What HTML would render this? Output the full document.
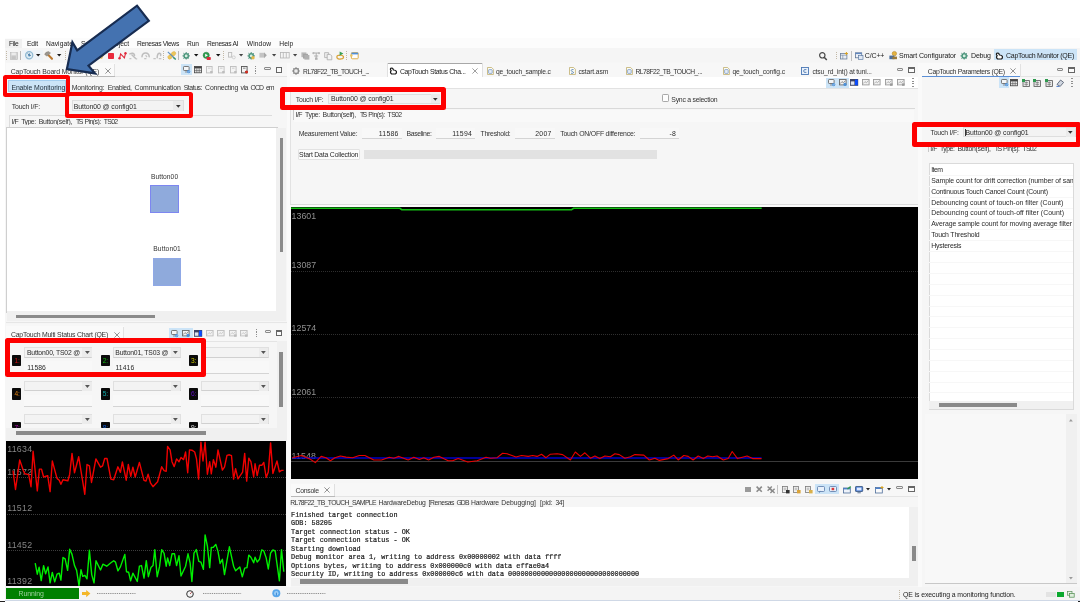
<!DOCTYPE html>
<html>
<head>
<meta charset="utf-8">
<title>CapTouch Monitor</title>
<style>
html,body{margin:0;padding:0;background:#fff;}
html{overflow:hidden;}
body{width:1080px;height:603px;position:relative;overflow:hidden;font-family:"Liberation Sans",sans-serif;font-size:6.7px;color:#2b2b2b;}
#w{left:0;top:0;width:1100px;height:620px;filter:blur(0.55px);background:#fff;}
div,span{position:absolute;box-sizing:border-box;white-space:nowrap;}
span{overflow:visible;}
</style>
</head>
<body>
<div id="w">
<div style="left:5.00px;top:38.00px;width:1075.00px;height:562.50px;background:#f6f6f6;"></div>
<div style="left:0.00px;top:600.50px;width:1080.00px;height:2.50px;background:#fff;"></div>
<div style="left:5.00px;top:600.30px;width:1075.00px;height:1.00px;background:#cfd8e6;"></div>
<div style="left:0.00px;top:600.60px;width:5.00px;height:1.60px;background:#222;"></div>
<div style="left:1077.50px;top:600.60px;width:2.50px;height:1.60px;background:#222;"></div>
<div style="left:5.00px;top:38.00px;width:1075.00px;height:9.80px;background:#fcfcfc;"></div>
<div style="left:5.00px;top:39.00px;width:17.00px;height:8.60px;background:#f0f0f0;"></div>
<span style="left:9.00px;top:38.50px;font-size:6.70px;line-height:10px;height:10px;color:#222;letter-spacing:-0.374px;">File</span>
<span style="left:27.00px;top:38.50px;font-size:6.70px;line-height:10px;height:10px;color:#222;letter-spacing:-0.136px;">Edit</span>
<span style="left:46.00px;top:38.50px;font-size:6.70px;line-height:10px;height:10px;color:#222;letter-spacing:0.069px;">Navigate</span>
<span style="left:81.00px;top:38.50px;font-size:6.70px;line-height:10px;height:10px;color:#222;letter-spacing:-0.122px;">Search</span>
<span style="left:108.50px;top:38.50px;font-size:6.70px;line-height:10px;height:10px;color:#222;letter-spacing:-0.050px;">Project</span>
<span style="left:137.00px;top:38.50px;font-size:6.70px;line-height:10px;height:10px;color:#222;letter-spacing:-0.312px;">Renesas Views</span>
<span style="left:187.00px;top:38.50px;font-size:6.70px;line-height:10px;height:10px;color:#222;letter-spacing:-0.197px;">Run</span>
<span style="left:207.00px;top:38.50px;font-size:6.70px;line-height:10px;height:10px;color:#222;letter-spacing:-0.297px;">Renesas AI</span>
<span style="left:246.70px;top:38.50px;font-size:6.70px;line-height:10px;height:10px;color:#222;letter-spacing:0.128px;">Window</span>
<span style="left:279.30px;top:38.50px;font-size:6.70px;line-height:10px;height:10px;color:#222;letter-spacing:0.055px;">Help</span>
<div style="left:5.00px;top:47.80px;width:1075.00px;height:14.70px;background:#f5f5f5;"></div>
<svg style="position:absolute;left:6.10px;top:51.00px;overflow:visible" width="1" height="9" viewBox="0 0 1 9"><line x1="0.5" y1="0" x2="0.5" y2="9" stroke="#c2b8a6" stroke-width="1" stroke-dasharray="1,1"/></svg>
<svg style="position:absolute;left:9.60px;top:51.80px;overflow:visible" width="8.2" height="8.2" viewBox="0 0 8.2 8.2"><rect x="0.3" y="0.3" width="7.4" height="7.4" fill="#d6d6d6" stroke="#bdbdbd" stroke-width="0.6"/><rect x="1.6" y="0.6" width="4.2" height="2.4" fill="#ececec"/><rect x="1.6" y="4.2" width="4.2" height="3" fill="#c4c4c4"/></svg>
<div style="left:19.90px;top:51.00px;width:0.80px;height:9.30px;background:#b8b8b8;"></div>
<div style="left:21.70px;top:49.80px;width:21.70px;height:10.60px;background:#eef3f8;"></div>
<svg style="position:absolute;left:24.60px;top:51.30px;overflow:visible" width="8.4" height="8.4" viewBox="0 0 8.4 8.4"><circle cx="4.2" cy="4.2" r="3.6" fill="#dcebf4" stroke="#8fb8d2" stroke-width="1.2"/><path d="M2.6 2.6 L5 5 M4.4 2.4 L4.4 4.4 L6 4.4" stroke="#3a6f9a" stroke-width="0.8" fill="none"/><circle cx="4.2" cy="4.4" r="1" fill="#4d86b4"/></svg>
<svg style="position:absolute;left:36.30px;top:54.20px;overflow:visible" width="4.4" height="2.6" viewBox="0 0 4.4 2.6"><polygon points="0,0 4.4,0 2.2,2.6" fill="#1a1a1a"/></svg>
<svg style="position:absolute;left:44.40px;top:51.00px;overflow:visible" width="9.4" height="9" viewBox="0 0 9.4 9"><path d="M4 3.6 L8 7.8" stroke="#b9772e" stroke-width="2.1" stroke-linecap="round"/><path d="M0.6 3.4 Q1.6 0.6 4.6 0.6 L6.6 2 L3 5.2 Z" fill="#9a9690" stroke="#7c7872" stroke-width="0.4"/></svg>
<svg style="position:absolute;left:57.40px;top:54.20px;overflow:visible" width="4.4" height="2.6" viewBox="0 0 4.4 2.6"><polygon points="0,0 4.4,0 2.2,2.6" fill="#1a1a1a"/></svg>
<svg style="position:absolute;left:64.70px;top:51.00px;overflow:visible" width="1" height="9" viewBox="0 0 1 9"><line x1="0.5" y1="0" x2="0.5" y2="9" stroke="#c2b8a6" stroke-width="1" stroke-dasharray="1,1"/></svg>
<svg style="position:absolute;left:98.50px;top:53.00px;overflow:visible" width="5" height="6" viewBox="0 0 5 6"><path d="M0 5 L2 0 L5 2 L3 6 Z" fill="#e6c46a"/></svg>
<div style="left:107.80px;top:52.90px;width:6.30px;height:6.40px;background:#e9293b;border-radius:0.8px;"></div>
<svg style="position:absolute;left:117.80px;top:51.80px;overflow:visible" width="9" height="7.6" viewBox="0 0 9 7.6"><path d="M1.6 6.4 L2.6 1.8 L6.4 5.8 L7.6 1.2" stroke="#e0283a" stroke-width="1.1" fill="none"/><circle cx="1.5" cy="6.3" r="1.2" fill="#e0283a"/><circle cx="7.5" cy="1.3" r="1.2" fill="#e0283a"/></svg>
<svg style="position:absolute;left:129.40px;top:52.00px;overflow:visible" width="8.6" height="7.4" viewBox="0 0 8.6 7.4"><path d="M0.8 1.8 Q4.4 0 5.6 3.2 M3 3 L6.4 6.2" stroke="#bebebe" stroke-width="1.5" fill="none" stroke-linecap="round"/><path d="M0.4 6.6 L2.4 6.6 M6.6 6.8 L8.2 6.8" stroke="#c4c4c4" stroke-width="1.2"/></svg>
<svg style="position:absolute;left:141.10px;top:52.00px;overflow:visible" width="9" height="7.4" viewBox="0 0 9 7.4"><path d="M1 4.8 Q1.2 1 4.6 1 Q8 1 8.2 4.8" stroke="#bebebe" stroke-width="1.5" fill="none" stroke-linecap="round"/><path d="M3.2 6.6 L5.4 6.6 M4.6 3.2 L6 5.2" stroke="#c4c4c4" stroke-width="1.2"/></svg>
<svg style="position:absolute;left:152.80px;top:52.00px;overflow:visible" width="9" height="7.4" viewBox="0 0 9 7.4"><path d="M4.2 5.8 Q4.2 1.2 6.6 1.2 Q8.2 1.6 7.6 3.6" stroke="#bebebe" stroke-width="1.5" fill="none" stroke-linecap="round"/><path d="M0.4 6.7 L2.8 6.7 M5.8 6.7 L8.4 6.7" stroke="#c4c4c4" stroke-width="1.2"/></svg>
<svg style="position:absolute;left:163.40px;top:51.00px;overflow:visible" width="1" height="9" viewBox="0 0 1 9"><line x1="0.5" y1="0" x2="0.5" y2="9" stroke="#c2b8a6" stroke-width="1" stroke-dasharray="1,1"/></svg>
<svg style="position:absolute;left:166.70px;top:51.20px;overflow:visible" width="9.6" height="8.8" viewBox="0 0 9.6 8.8"><ellipse cx="6.4" cy="2.8" rx="2.6" ry="2" fill="#ecc65a" stroke="#d8aa3c" stroke-width="0.4" transform="rotate(-35 6.4 2.8)"/><ellipse cx="3.2" cy="5.8" rx="2.6" ry="2" fill="#ecc65a" stroke="#d8aa3c" stroke-width="0.4" transform="rotate(-35 3.2 5.8)"/><path d="M0.8 0.8 L8.4 8" stroke="#5b8fc6" stroke-width="1.1"/><path d="M6.2 6.4 L8.8 8.4" stroke="#3e9a66" stroke-width="1.3"/></svg>
<div style="left:177.70px;top:51.00px;width:0.80px;height:9.30px;background:#b8b8b8;"></div>
<svg style="position:absolute;left:182.20px;top:52.00px;overflow:visible" width="8.4" height="7.4" viewBox="0 0 8.4 7.4"><circle cx="4.2" cy="3.9" r="2.6" fill="#4f9f80" stroke="#35806a" stroke-width="0.6"/><circle cx="4.2" cy="3.9" r="1.4" fill="#d8ece2"/><path d="M4.2 0 L4.2 1.2 M4.2 6.4 L4.2 7.6 M0.4 3.9 L1.6 3.9 M6.8 3.9 L8 3.9 M1.4 1.2 L2.3 2 M7 1.2 L6.1 2 M1.4 6.6 L2.3 5.8 M7 6.6 L6.1 5.8" stroke="#35806a" stroke-width="0.8"/></svg>
<svg style="position:absolute;left:194.20px;top:54.20px;overflow:visible" width="4.4" height="2.6" viewBox="0 0 4.4 2.6"><polygon points="0,0 4.4,0 2.2,2.6" fill="#111"/></svg>
<svg style="position:absolute;left:202.80px;top:51.60px;overflow:visible" width="8" height="8.4" viewBox="0 0 8 8.4"><circle cx="3.2" cy="3.3" r="3.1" fill="#2f9e50" stroke="#1f7a3a" stroke-width="0.5"/><polygon points="2.2,1.7 2.2,4.9 4.9,3.3" fill="#fff"/><rect x="3.6" y="5" width="4.2" height="3" rx="0.8" fill="#e0283a"/></svg>
<svg style="position:absolute;left:215.60px;top:54.20px;overflow:visible" width="4.4" height="2.6" viewBox="0 0 4.4 2.6"><polygon points="0,0 4.4,0 2.2,2.6" fill="#111"/></svg>
<svg style="position:absolute;left:222.90px;top:51.00px;overflow:visible" width="1" height="9" viewBox="0 0 1 9"><line x1="0.5" y1="0" x2="0.5" y2="9" stroke="#c2b8a6" stroke-width="1" stroke-dasharray="1,1"/></svg>
<svg style="position:absolute;left:227.60px;top:52.00px;overflow:visible" width="8" height="7.4" viewBox="0 0 8 7.4"><rect x="0.5" y="0.5" width="3.2" height="4.6" fill="none" stroke="#bdbdbd" stroke-width="0.9"/><circle cx="5.8" cy="5.4" r="1.5" fill="none" stroke="#c8c8c8" stroke-width="0.8"/></svg>
<svg style="position:absolute;left:239.10px;top:54.25px;overflow:visible" width="4.2" height="2.5" viewBox="0 0 4.2 2.5"><polygon points="0,0 4.2,0 2.1,2.5" fill="#444"/></svg>
<svg style="position:absolute;left:246.60px;top:51.60px;overflow:visible" width="8.4" height="7.4" viewBox="0 0 8.4 7.4"><circle cx="4.2" cy="3.9" r="2.6" fill="#4f9f80" stroke="#35806a" stroke-width="0.6"/><circle cx="4.2" cy="3.9" r="1.4" fill="#d8ece2"/><path d="M4.2 0 L4.2 1.2 M4.2 6.4 L4.2 7.6 M0.4 3.9 L1.6 3.9 M6.8 3.9 L8 3.9 M1.4 1.2 L2.3 2 M7 1.2 L6.1 2 M1.4 6.6 L2.3 5.8 M7 6.6 L6.1 5.8" stroke="#35806a" stroke-width="0.8"/></svg>
<svg style="position:absolute;left:251.20px;top:56.00px;overflow:visible" width="4" height="3.6" viewBox="0 0 4 3.6"><circle cx="2" cy="1.8" r="1.7" fill="#e6b84a"/></svg>
<svg style="position:absolute;left:259.40px;top:52.40px;overflow:visible" width="8" height="6.4" viewBox="0 0 8 6.4"><rect x="0.4" y="0.8" width="4.6" height="4.8" fill="#c4c4c4"/><polygon points="5,0.2 7.8,3.2 5,6.2" fill="#a8a8a8"/></svg>
<svg style="position:absolute;left:271.90px;top:54.25px;overflow:visible" width="4.2" height="2.5" viewBox="0 0 4.2 2.5"><polygon points="0,0 4.2,0 2.1,2.5" fill="#444"/></svg>
<svg style="position:absolute;left:279.60px;top:52.40px;overflow:visible" width="9.6" height="6.4" viewBox="0 0 9.6 6.4"><rect x="0.4" y="0.4" width="8.8" height="5.6" fill="none" stroke="#b4b4b4" stroke-width="0.8"/><path d="M3.3 0.4 L3.3 6 M6.3 0.4 L6.3 6" stroke="#b4b4b4" stroke-width="0.8"/></svg>
<svg style="position:absolute;left:292.90px;top:54.25px;overflow:visible" width="4.2" height="2.5" viewBox="0 0 4.2 2.5"><polygon points="0,0 4.2,0 2.1,2.5" fill="#444"/></svg>
<svg style="position:absolute;left:301.20px;top:51.80px;overflow:visible" width="8.6" height="7.8" viewBox="0 0 8.6 7.8"><rect x="0.4" y="0.4" width="5" height="4.8" fill="#b8b8b8"/><rect x="2" y="1.8" width="5" height="4.8" fill="#a4a4a4"/><rect x="3.4" y="3" width="5" height="4.6" fill="#b0b0b0"/></svg>
<svg style="position:absolute;left:312.00px;top:51.60px;overflow:visible" width="8.4" height="8" viewBox="0 0 8.4 8"><path d="M1.6 1 L6.6 1 M4.2 1 L4.2 7 M2.2 4 L6.2 4" stroke="#a8a8a8" stroke-width="0.9" fill="none"/><circle cx="1.4" cy="1.2" r="1.1" fill="#b8b8b8"/><circle cx="7" cy="1.2" r="1.1" fill="#b8b8b8"/><rect x="3" y="5.6" width="2.6" height="2.2" fill="#b0b0b0"/></svg>
<svg style="position:absolute;left:323.60px;top:51.60px;overflow:visible" width="8.6" height="8.2" viewBox="0 0 8.6 8.2"><path d="M0.6 0.6 L4.6 0.6 L4.6 5.6 L0.6 5.6 Z" fill="#ececec" stroke="#b0b0b0" stroke-width="0.8"/><path d="M3.2 2.4 L6.2 2.4 L7.8 4 L7.8 7.8 L3.2 7.8 Z" fill="#f4f4f4" stroke="#a8a8a8" stroke-width="0.8"/></svg>
<svg style="position:absolute;left:335.60px;top:51.40px;overflow:visible" width="9" height="8.6" viewBox="0 0 9 8.6"><path d="M1 6.8 Q0.4 4 3 4.4 Q6 3.6 7.4 5.4 Q8 8 5 7.8 Q2.6 8.8 1 6.8Z" fill="none" stroke="#d9a43a" stroke-width="1.3"/><polygon points="3.6,0.4 3.6,4.8 7.4,2.6" fill="#3aa055"/></svg>
<svg style="position:absolute;left:346.20px;top:51.00px;overflow:visible" width="1" height="9" viewBox="0 0 1 9"><line x1="0.5" y1="0" x2="0.5" y2="9" stroke="#c2b8a6" stroke-width="1" stroke-dasharray="1,1"/></svg>
<svg style="position:absolute;left:349.80px;top:52.00px;overflow:visible" width="8.6" height="7.4" viewBox="0 0 8.6 7.4"><rect x="1.4" y="0.6" width="6.8" height="6.2" rx="0.8" fill="#fdfdfd" stroke="#e0b04a" stroke-width="1"/><rect x="1.4" y="0.6" width="6.8" height="1.8" fill="#4f8fd8"/><circle cx="1.3" cy="3.6" r="1.3" fill="#e8c466"/></svg>
<svg style="position:absolute;left:819.40px;top:51.60px;overflow:visible" width="8" height="8.4" viewBox="0 0 8 8.4"><circle cx="3.3" cy="3.3" r="2.7" fill="none" stroke="#4a4a4a" stroke-width="1.2"/><path d="M5.2 5.2 L7.8 8" stroke="#4a4a4a" stroke-width="1.5"/></svg>
<svg style="position:absolute;left:835.50px;top:52.00px;overflow:visible" width="1" height="8" viewBox="0 0 1 8"><line x1="0.5" y1="0" x2="0.5" y2="8" stroke="#c2b8a6" stroke-width="1" stroke-dasharray="1,1"/></svg>
<svg style="position:absolute;left:839.80px;top:51.80px;overflow:visible" width="8.4" height="7.6" viewBox="0 0 8.4 7.6"><rect x="0.5" y="1.4" width="6.4" height="5.6" fill="#e9eef5" stroke="#6d7f99" stroke-width="0.8"/><path d="M0.5 3.2 L6.9 3.2 M2.8 3.2 L2.8 7" stroke="#6d7f99" stroke-width="0.6"/><path d="M6.4 0 L6.4 3 M4.9 1.5 L7.9 1.5" stroke="#d9a21e" stroke-width="1"/></svg>
<div style="left:850.80px;top:50.50px;width:0.80px;height:10.00px;background:#c0c0c0;"></div>
<svg style="position:absolute;left:855.00px;top:51.60px;overflow:visible" width="8.6" height="8" viewBox="0 0 8.6 8"><rect x="0.5" y="0.8" width="6.2" height="5" fill="#eef2f8" stroke="#5f7694" stroke-width="0.8"/><rect x="0.5" y="0.8" width="6.2" height="1.3" fill="#5f86c0"/><rect x="3.6" y="3.6" width="4.4" height="4" fill="#dfe8f4" stroke="#4e6e9a" stroke-width="0.6"/></svg>
<span style="left:864.80px;top:51.40px;font-size:7.00px;line-height:10px;height:10px;color:#222;letter-spacing:-0.146px;">C/C++</span>
<svg style="position:absolute;left:888.60px;top:51.40px;overflow:visible" width="8.6" height="8.6" viewBox="0 0 8.6 8.6"><circle cx="5.4" cy="2.6" r="2.2" fill="#e4b340" stroke="#a97a1c" stroke-width="0.5"/><rect x="0.4" y="4.6" width="5" height="3.6" fill="#4b6f9e"/><rect x="3.4" y="5.6" width="4.6" height="2.6" fill="#9a7a3a"/></svg>
<span style="left:899.00px;top:51.40px;font-size:7.00px;line-height:10px;height:10px;color:#222;letter-spacing:-0.119px;">Smart Configurator</span>
<svg style="position:absolute;left:960.40px;top:51.80px;overflow:visible" width="8.4" height="7.4" viewBox="0 0 8.4 7.4"><circle cx="4.2" cy="3.9" r="2.6" fill="#4f9f80" stroke="#35806a" stroke-width="0.6"/><circle cx="4.2" cy="3.9" r="1.4" fill="#d8ece2"/><path d="M4.2 0 L4.2 1.2 M4.2 6.4 L4.2 7.6 M0.4 3.9 L1.6 3.9 M6.8 3.9 L8 3.9 M1.4 1.2 L2.3 2 M7 1.2 L6.1 2 M1.4 6.6 L2.3 5.8 M7 6.6 L6.1 5.8" stroke="#35806a" stroke-width="0.8"/></svg>
<span style="left:971.00px;top:51.40px;font-size:7.00px;line-height:10px;height:10px;color:#222;letter-spacing:-0.166px;">Debug</span>
<div style="left:994.00px;top:49.20px;width:83.00px;height:11.20px;background:#cce4f7;"></div>
<svg style="position:absolute;left:995.40px;top:51.60px;overflow:visible" width="8.4" height="8" viewBox="0 0 8.4 8"><path d="M1.8 1.2 Q0.8 2.6 2.2 3.6 Q0.6 5.4 2.6 7 L6.4 7 Q8 6.2 7.4 4.4 Q6.4 2.8 4.4 3 Q3.8 0.6 1.8 1.2Z" fill="#fff" stroke="#1a1a1a" stroke-width="1.2" stroke-linejoin="round"/></svg>
<span style="left:1006.00px;top:51.40px;font-size:7.00px;line-height:10px;height:10px;color:#1a1a1a;letter-spacing:-0.263px;">CapTouch Monitor (QE)</span>
<div style="left:5.00px;top:586.50px;width:1075.00px;height:13.80px;background:#f4f4f4;"></div>
<div style="left:5.60px;top:587.80px;width:73.40px;height:11.40px;background:#008000;"></div>
<span style="left:18.60px;top:589.20px;font-size:6.90px;line-height:10px;height:10px;color:#9fd09f;letter-spacing:-0.058px;">Running</span>
<svg style="position:absolute;left:82.00px;top:590.00px;overflow:visible" width="8.6" height="7.2" viewBox="0 0 8.6 7.2"><polygon points="0,2.1 4.2,2.1 4.2,0 8.4,3.6 4.2,7.2 4.2,5.1 0,5.1" fill="#f4b728"/></svg>
<svg style="position:absolute;left:96.90px;top:593.10px;overflow:visible" width="38.5" height="1" viewBox="0 0 38.5 1"><line x1="0" y1="0.5" x2="38.5" y2="0.5" stroke="#777" stroke-width="0.8" stroke-dasharray="1.3,0.9"/></svg>
<svg style="position:absolute;left:186.20px;top:589.60px;overflow:visible" width="8" height="8" viewBox="0 0 8 8"><circle cx="4" cy="4" r="3.3" fill="#f4f4f4" stroke="#333" stroke-width="1"/><path d="M4 4 L5.8 2.2" stroke="#a33" stroke-width="0.8"/></svg>
<svg style="position:absolute;left:202.80px;top:593.10px;overflow:visible" width="38.1" height="1" viewBox="0 0 38.1 1"><line x1="0" y1="0.5" x2="38.1" y2="0.5" stroke="#777" stroke-width="0.8" stroke-dasharray="1.3,0.9"/></svg>
<svg style="position:absolute;left:271.60px;top:589.40px;overflow:visible" width="8.6" height="8.6" viewBox="0 0 8.6 8.6"><circle cx="4.3" cy="4.3" r="4" fill="#58a6ea"/><circle cx="4.3" cy="4.3" r="2.2" fill="#9fd0f8"/><rect x="3.9" y="3.6" width="0.9" height="3" fill="#2f7fd0"/></svg>
<svg style="position:absolute;left:286.80px;top:593.10px;overflow:visible" width="38.4" height="1" viewBox="0 0 38.4 1"><line x1="0" y1="0.5" x2="38.4" y2="0.5" stroke="#777" stroke-width="0.8" stroke-dasharray="1.3,0.9"/></svg>
<svg style="position:absolute;left:899.10px;top:590.00px;overflow:visible" width="1" height="9" viewBox="0 0 1 9"><line x1="0.5" y1="0" x2="0.5" y2="9" stroke="#c2b8a6" stroke-width="1" stroke-dasharray="1,1"/></svg>
<span style="left:903.00px;top:590.20px;font-size:6.90px;line-height:10px;height:10px;color:#222;letter-spacing:-0.092px;">QE is executing a monitoring function.</span>
<div style="left:1046.00px;top:591.70px;width:9.50px;height:5.70px;background:#e3e3e3;"></div>
<div style="left:1057.00px;top:591.70px;width:6.80px;height:5.70px;background:#0aa82e;"></div>
<svg style="position:absolute;left:1066.80px;top:591.00px;overflow:visible" width="8" height="7" viewBox="0 0 8 7"><rect x="0.4" y="0.6" width="4.6" height="3.6" fill="#e6f2e6" stroke="#5a8f5a" stroke-width="0.7"/><rect x="2.6" y="2.6" width="4.6" height="3.6" fill="#dfeedd" stroke="#4d8a4d" stroke-width="0.7"/></svg>
<div style="left:5.00px;top:62.50px;width:282.00px;height:14.50px;background:#f7f7f7;"></div>
<div style="left:5.50px;top:63.00px;width:109.00px;height:14.00px;background:#fafafa;"></div>
<div style="left:114.20px;top:63.50px;width:0.80px;height:13.50px;background:#e2e2e2;"></div>
<span style="left:10.80px;top:66.60px;font-size:6.90px;line-height:10px;height:10px;color:#333;letter-spacing:-0.160px;">CapTouch Board Monitor (QE)</span>
<svg style="position:absolute;left:104.60px;top:68.00px;overflow:visible" width="6" height="6" viewBox="0 0 6 6"><path d="M0.4 0.4 L5.6 5.6 M5.6 0.4 L0.4 5.6" stroke="#666" stroke-width="0.7"/></svg>
<div style="left:5.50px;top:76.00px;width:109.10px;height:1.00px;background:#b9b9b9;"></div>
<div style="left:114.60px;top:76.40px;width:172.40px;height:0.70px;background:#e4e4e4;"></div>
<div style="left:180.60px;top:64.00px;width:11.60px;height:10.80px;background:#cce4f7;"></div>
<svg style="position:absolute;left:183.00px;top:66.00px;overflow:visible" width="7.4" height="7.4" viewBox="0 0 7.4 7.4"><rect x="0.5" y="0.5" width="5.6" height="4" rx="0.7" fill="#f4f6f8" stroke="#6a6a6a" stroke-width="0.9"/><path d="M2 6 L4.6 6" stroke="#777" stroke-width="0.8"/><circle cx="5.6" cy="5.6" r="1.7" fill="#4a90d9"/><path d="M4.8 5.6 L5.4 6.3 L6.5 5" stroke="#fff" stroke-width="0.5" fill="none"/></svg>
<svg style="position:absolute;left:194.20px;top:66.00px;overflow:visible" width="8" height="7.4" viewBox="0 0 8 7.4"><rect x="0.4" y="0.4" width="7.2" height="6.4" fill="#e8e8e8" stroke="#444" stroke-width="0.8"/><rect x="0.4" y="0.4" width="7.2" height="2" fill="#444"/><path d="M2.8 2.4 L2.8 6.8 M5.2 2.4 L5.2 6.8 M0.4 4.6 L7.6 4.6" stroke="#555" stroke-width="0.6"/></svg>
<svg style="position:absolute;left:206.10px;top:66.00px;overflow:visible" width="7.2" height="7.6" viewBox="0 0 7.2 7.6"><rect x="0.5" y="0.5" width="5.6" height="6.4" fill="#f4f4f4" stroke="#bdbdbd" stroke-width="0.9"/><path d="M2 2.2 L4.6 2.2" stroke="#bdbdbd" stroke-width="0.7"/><rect x="4.2" y="5" width="2.4" height="2.2" fill="#bdbdbd"/></svg>
<svg style="position:absolute;left:218.00px;top:66.00px;overflow:visible" width="7.2" height="7.6" viewBox="0 0 7.2 7.6"><rect x="0.5" y="0.5" width="5.6" height="6.4" fill="#f4f4f4" stroke="#bdbdbd" stroke-width="0.9"/><path d="M2 2.2 L4.6 2.2" stroke="#bdbdbd" stroke-width="0.7"/><rect x="4.2" y="5" width="2.4" height="2.2" fill="#bdbdbd"/></svg>
<svg style="position:absolute;left:229.60px;top:66.00px;overflow:visible" width="7.2" height="7.6" viewBox="0 0 7.2 7.6"><rect x="0.5" y="0.5" width="5.6" height="6.4" fill="#f4f4f4" stroke="#bdbdbd" stroke-width="0.9"/><path d="M2 2.2 L4.6 2.2" stroke="#bdbdbd" stroke-width="0.7"/><rect x="4.2" y="5" width="2.4" height="2.2" fill="#bdbdbd"/></svg>
<svg style="position:absolute;left:241.10px;top:66.00px;overflow:visible" width="7.2" height="7.6" viewBox="0 0 7.2 7.6"><rect x="0.5" y="0.5" width="5.6" height="6.4" fill="#f4f4f4" stroke="#555" stroke-width="0.9"/><path d="M2 2.2 L4.6 2.2" stroke="#555" stroke-width="0.7"/><rect x="4.2" y="5" width="2.4" height="2.2" fill="#555"/><circle cx="5.6" cy="6" r="1.5" fill="#d42a1e"/></svg>
<div style="left:254.95px;top:65.50px;width:1.50px;height:1.40px;background:#909090;"></div>
<div style="left:254.95px;top:67.83px;width:1.50px;height:1.40px;background:#909090;"></div>
<div style="left:254.95px;top:70.17px;width:1.50px;height:1.40px;background:#909090;"></div>
<div style="left:254.95px;top:72.50px;width:1.50px;height:1.40px;background:#909090;"></div>
<div style="left:264.40px;top:66.70px;width:6.60px;height:3.00px;border:0.7px solid #8a8a8a;background:#f2f2f2;border-radius:1px;"></div>
<div style="left:276.10px;top:66.90px;width:6.40px;height:6.00px;border:0.7px solid #666;background:#fbfbfb;"></div>
<div style="left:276.10px;top:66.90px;width:6.40px;height:1.50px;background:#666;"></div>
<div style="left:5.50px;top:77.00px;width:281.50px;height:51.00px;background:#f6f6f6;"></div>
<div style="left:7.60px;top:80.20px;width:58.60px;height:12.00px;border:0.6px solid #a4cdee;background:#cce4f7;"></div>
<span style="left:11.40px;top:83.20px;font-size:6.90px;line-height:10px;height:10px;color:#1d2a36;letter-spacing:-0.101px;">Enable Monitoring</span>
<span style="left:71.70px;top:83.20px;font-size:6.90px;line-height:10px;height:10px;color:#333;letter-spacing:-0.103px;">Monitoring:</span>
<span style="left:107.80px;top:83.20px;font-size:6.90px;line-height:10px;height:10px;color:#333;letter-spacing:-0.430px;">Enabled,</span>
<span style="left:134.60px;top:83.20px;font-size:6.90px;line-height:10px;height:10px;color:#333;letter-spacing:-0.141px;">Communication</span>
<span style="left:183.70px;top:83.20px;font-size:6.90px;line-height:10px;height:10px;color:#333;letter-spacing:-0.440px;">Status:</span>
<span style="left:205.10px;top:83.20px;font-size:6.90px;line-height:10px;height:10px;color:#333;letter-spacing:-0.191px;">Connecting</span>
<span style="left:240.60px;top:83.20px;font-size:6.90px;line-height:10px;height:10px;color:#333;letter-spacing:-0.507px;">via</span>
<span style="left:250.40px;top:83.20px;font-size:6.90px;line-height:10px;height:10px;color:#333;letter-spacing:-0.844px;">OCD</span>
<span style="left:266.00px;top:83.20px;font-size:6.90px;line-height:10px;height:10px;color:#333;letter-spacing:-0.993px;">em</span>
<span style="left:11.80px;top:101.80px;font-size:6.90px;line-height:10px;height:10px;color:#333;letter-spacing:-0.220px;">Touch I/F:</span>
<div style="left:71.50px;top:100.20px;width:112.30px;height:11.20px;border:0.7px solid #dedede;background:#f3f3f3;"></div>
<div style="left:173.40px;top:100.90px;width:9.70px;height:9.80px;background:#ebebeb;"></div>
<span style="left:73.80px;top:101.60px;font-size:6.90px;line-height:10px;height:10px;color:#2a2a2a;letter-spacing:-0.082px;">Button00 @ config01</span>
<svg style="position:absolute;left:176.30px;top:104.60px;overflow:visible" width="4.6" height="2.8" viewBox="0 0 4.6 2.8"><polygon points="0,0 4.6,0 2.3,2.8" fill="#333"/></svg>
<div style="left:9.00px;top:115.00px;width:263.30px;height:0.80px;background:#dcdcdc;"></div>
<div style="left:9.00px;top:115.00px;width:0.70px;height:12.00px;background:#dcdcdc;"></div>
<div style="left:0;top:116px;width:280px;height:9.3px;overflow:hidden;">
<span style="left:11.60px;top:1.40px;font-size:6.90px;line-height:10px;height:10px;color:#333;letter-spacing:-0.483px;">I/F</span>
<span style="left:21.20px;top:1.40px;font-size:6.90px;line-height:10px;height:10px;color:#333;letter-spacing:-0.475px;">Type:</span>
<span style="left:38.70px;top:1.40px;font-size:6.90px;line-height:10px;height:10px;color:#333;letter-spacing:-0.292px;">Button(self),</span>
<span style="left:76.00px;top:1.40px;font-size:6.90px;line-height:10px;height:10px;color:#333;letter-spacing:-1.509px;">TS</span>
<span style="left:84.40px;top:1.40px;font-size:6.90px;line-height:10px;height:10px;color:#333;letter-spacing:-0.519px;">Pin(s):</span>
<span style="left:103.70px;top:1.40px;font-size:6.90px;line-height:10px;height:10px;color:#333;letter-spacing:-0.673px;">TS02</span>
</div>
<div style="left:5.80px;top:126.60px;width:272.20px;height:1.00px;background:#cfcfcf;"></div>
<div style="left:5.80px;top:127.60px;width:0.80px;height:185.40px;background:#cfcfcf;"></div>
<div style="left:6.60px;top:127.60px;width:269.80px;height:183.80px;background:#ffffff;"></div>
<div style="left:276.40px;top:127.60px;width:10.10px;height:193.60px;background:#f0f0f0;"></div>
<div style="left:279.60px;top:138.00px;width:3.60px;height:114.40px;background:#8a8a8a;"></div>
<div style="left:6.60px;top:311.40px;width:269.80px;height:9.80px;background:#f0f0f0;"></div>
<div style="left:16.00px;top:315.00px;width:139.00px;height:3.40px;background:#8a8a8a;"></div>
<span style="left:151.00px;top:171.60px;font-size:6.70px;line-height:10px;height:10px;color:#333;letter-spacing:0.047px;">Button00</span>
<div style="left:150.00px;top:184.90px;width:28.70px;height:28.30px;border:0.8px solid #7d86f0;background:#8faadc;"></div>
<span style="left:153.30px;top:244.20px;font-size:6.70px;line-height:10px;height:10px;color:#333;letter-spacing:0.097px;">Button01</span>
<div style="left:152.70px;top:257.60px;width:28.60px;height:28.60px;border:0.8px solid #8fa8e6;background:#8faadc;"></div>
<div style="left:5.50px;top:322.00px;width:281.50px;height:1.00px;background:#e6e6e6;"></div>
<div style="left:5.50px;top:324.00px;width:281.50px;height:16.50px;background:#f7f7f7;"></div>
<div style="left:5.50px;top:326.00px;width:118.10px;height:14.50px;background:#fafafa;"></div>
<div style="left:123.20px;top:326.50px;width:0.80px;height:14.00px;background:#e2e2e2;"></div>
<span style="left:11.00px;top:330.40px;font-size:6.90px;line-height:10px;height:10px;color:#333;letter-spacing:-0.222px;">CapTouch Multi Status Chart (QE)</span>
<svg style="position:absolute;left:113.60px;top:331.80px;overflow:visible" width="6" height="6" viewBox="0 0 6 6"><path d="M0.4 0.4 L5.6 5.6 M5.6 0.4 L0.4 5.6" stroke="#666" stroke-width="0.7"/></svg>
<div style="left:169.20px;top:327.60px;width:23.60px;height:10.00px;background:#cce4f7;"></div>
<svg style="position:absolute;left:171.40px;top:329.80px;overflow:visible" width="7.4" height="7.4" viewBox="0 0 7.4 7.4"><rect x="0.5" y="0.5" width="5.6" height="4" rx="0.7" fill="#f4f6f8" stroke="#6a6a6a" stroke-width="0.9"/><path d="M2 6 L4.6 6" stroke="#777" stroke-width="0.8"/><circle cx="5.6" cy="5.6" r="1.7" fill="#4a90d9"/><path d="M4.8 5.6 L5.4 6.3 L6.5 5" stroke="#fff" stroke-width="0.5" fill="none"/></svg>
<svg style="position:absolute;left:182.40px;top:330.00px;overflow:visible" width="8" height="7" viewBox="0 0 8 7"><rect x="0.5" y="0.5" width="6.6" height="5.4" fill="#f2f2f2" stroke="#6a6a6a" stroke-width="0.9"/><path d="M1.2 4.6 L3 2.6 L4.4 3.8 L6.4 1.6" stroke="#6a6a6a" stroke-width="0.7" fill="none"/><circle cx="6" cy="5.4" r="1.6" fill="#4a90d9"/></svg>
<svg style="position:absolute;left:193.90px;top:329.80px;overflow:visible" width="8.2" height="6.8" viewBox="0 0 8.2 6.8"><rect x="0" y="0" width="8.2" height="6.8" fill="#3d4466"/><rect x="0.8" y="2.4" width="3.6" height="3.4" fill="#dfe4f0"/><rect x="5" y="0.6" width="2.8" height="5.6" fill="#0a4cff"/></svg>
<svg style="position:absolute;left:205.50px;top:330.00px;overflow:visible" width="8" height="7" viewBox="0 0 8 7"><rect x="0.5" y="0.5" width="6.6" height="5.4" fill="#f2f2f2" stroke="#bdbdbd" stroke-width="0.9"/><path d="M1.2 4.6 L3 2.6 L4.4 3.8 L6.4 1.6" stroke="#bdbdbd" stroke-width="0.7" fill="none"/></svg>
<svg style="position:absolute;left:217.00px;top:330.00px;overflow:visible" width="8" height="7" viewBox="0 0 8 7"><rect x="0.5" y="0.5" width="6.6" height="5.4" fill="#f2f2f2" stroke="#bdbdbd" stroke-width="0.9"/><path d="M1.2 4.6 L3 2.6 L4.4 3.8 L6.4 1.6" stroke="#bdbdbd" stroke-width="0.7" fill="none"/></svg>
<svg style="position:absolute;left:228.80px;top:330.00px;overflow:visible" width="8" height="7" viewBox="0 0 8 7"><rect x="0.5" y="0.5" width="6.6" height="5.4" fill="#f2f2f2" stroke="#bdbdbd" stroke-width="0.9"/><path d="M1.2 4.6 L3 2.6 L4.4 3.8 L6.4 1.6" stroke="#bdbdbd" stroke-width="0.7" fill="none"/><rect x="5" y="4.4" width="2.6" height="2.4" fill="#bdbdbd"/></svg>
<svg style="position:absolute;left:240.40px;top:330.00px;overflow:visible" width="8" height="7" viewBox="0 0 8 7"><rect x="0.5" y="0.5" width="6.6" height="5.4" fill="#f2f2f2" stroke="#bdbdbd" stroke-width="0.9"/><path d="M1.2 4.6 L3 2.6 L4.4 3.8 L6.4 1.6" stroke="#bdbdbd" stroke-width="0.7" fill="none"/><rect x="5" y="4.4" width="2.6" height="2.4" fill="#bdbdbd"/></svg>
<div style="left:255.65px;top:328.90px;width:1.50px;height:1.40px;background:#909090;"></div>
<div style="left:255.65px;top:331.30px;width:1.50px;height:1.40px;background:#909090;"></div>
<div style="left:255.65px;top:333.70px;width:1.50px;height:1.40px;background:#909090;"></div>
<div style="left:255.65px;top:336.10px;width:1.50px;height:1.40px;background:#909090;"></div>
<div style="left:264.50px;top:330.20px;width:6.60px;height:3.00px;border:0.7px solid #8a8a8a;background:#f2f2f2;border-radius:1px;"></div>
<div style="left:276.00px;top:330.40px;width:6.40px;height:6.00px;border:0.7px solid #666;background:#fbfbfb;"></div>
<div style="left:276.00px;top:330.40px;width:6.40px;height:1.50px;background:#666;"></div>
<div style="left:5.50px;top:340.50px;width:281.50px;height:100.50px;background:#f6f6f6;"></div>
<div style="left:5.50px;top:340.50px;width:281.50px;height:0.70px;background:#e4e4e4;"></div>
<div style="left:12.20px;top:354.80px;width:9.20px;height:11.40px;background:#0a0a0a;border-radius:0.8px;"></div>
<span style="left:14.40px;top:355.90px;font-size:6.60px;line-height:10px;height:10px;color:#d01010;letter-spacing:-0.152px;">1:</span>
<div style="left:24.40px;top:347.40px;width:67.90px;height:10.40px;border:0.7px solid #e0e0e0;background:#f3f3f3;border-bottom-color:#d0d0d0;"></div>
<div style="left:82.30px;top:348.10px;width:9.30px;height:9.00px;background:#ececec;"></div>
<svg style="position:absolute;left:84.70px;top:351.40px;overflow:visible" width="4.8" height="3" viewBox="0 0 4.8 3"><polygon points="0,0 4.8,0 2.4,3" fill="#555"/></svg>
<span style="left:27.00px;top:348.40px;font-size:6.80px;line-height:10px;height:10px;color:#2a2a2a;letter-spacing:-0.183px;">Button00, TS02 @</span>
<div style="left:24.40px;top:361.40px;width:67.90px;height:11.80px;background:#f8f8f8;"></div>
<div style="left:24.40px;top:372.60px;width:67.90px;height:0.70px;background:#d4d4d4;"></div>
<span style="left:27.20px;top:363.10px;font-size:6.80px;line-height:10px;height:10px;color:#2a2a2a;letter-spacing:0.079px;">11586</span>
<div style="left:100.50px;top:354.80px;width:9.20px;height:11.40px;background:#0a0a0a;border-radius:0.8px;"></div>
<span style="left:102.70px;top:355.90px;font-size:6.60px;line-height:10px;height:10px;color:#10b810;letter-spacing:-0.152px;">2:</span>
<div style="left:112.70px;top:347.40px;width:67.90px;height:10.40px;border:0.7px solid #e0e0e0;background:#f3f3f3;border-bottom-color:#d0d0d0;"></div>
<div style="left:170.60px;top:348.10px;width:9.30px;height:9.00px;background:#ececec;"></div>
<svg style="position:absolute;left:173.00px;top:351.40px;overflow:visible" width="4.8" height="3" viewBox="0 0 4.8 3"><polygon points="0,0 4.8,0 2.4,3" fill="#555"/></svg>
<span style="left:115.30px;top:348.40px;font-size:6.80px;line-height:10px;height:10px;color:#2a2a2a;letter-spacing:-0.183px;">Button01, TS03 @</span>
<div style="left:112.70px;top:361.40px;width:67.90px;height:11.80px;background:#f8f8f8;"></div>
<div style="left:112.70px;top:372.60px;width:67.90px;height:0.70px;background:#d4d4d4;"></div>
<span style="left:115.50px;top:363.10px;font-size:6.80px;line-height:10px;height:10px;color:#2a2a2a;letter-spacing:0.079px;">11416</span>
<div style="left:188.90px;top:354.80px;width:9.20px;height:11.40px;background:#0a0a0a;border-radius:0.8px;"></div>
<span style="left:191.10px;top:355.90px;font-size:6.60px;line-height:10px;height:10px;color:#c8c800;letter-spacing:-0.152px;">3:</span>
<div style="left:201.10px;top:347.40px;width:67.90px;height:10.40px;border:0.7px solid #e0e0e0;background:#f3f3f3;border-bottom-color:#d0d0d0;"></div>
<div style="left:259.00px;top:348.10px;width:9.30px;height:9.00px;background:#ececec;"></div>
<svg style="position:absolute;left:261.40px;top:351.40px;overflow:visible" width="4.8" height="3" viewBox="0 0 4.8 3"><polygon points="0,0 4.8,0 2.4,3" fill="#555"/></svg>
<div style="left:201.10px;top:361.40px;width:67.90px;height:11.80px;background:#f8f8f8;"></div>
<div style="left:201.10px;top:372.60px;width:67.90px;height:0.70px;background:#d4d4d4;"></div>
<div style="left:12.20px;top:388.20px;width:9.20px;height:11.40px;background:#0a0a0a;border-radius:0.8px;"></div>
<span style="left:14.40px;top:389.30px;font-size:6.60px;line-height:10px;height:10px;color:#e08010;letter-spacing:-0.152px;">4:</span>
<div style="left:24.40px;top:380.80px;width:67.90px;height:10.40px;border:0.7px solid #e0e0e0;background:#f3f3f3;border-bottom-color:#d0d0d0;"></div>
<div style="left:82.30px;top:381.50px;width:9.30px;height:9.00px;background:#ececec;"></div>
<svg style="position:absolute;left:84.70px;top:384.80px;overflow:visible" width="4.8" height="3" viewBox="0 0 4.8 3"><polygon points="0,0 4.8,0 2.4,3" fill="#555"/></svg>
<div style="left:24.40px;top:394.80px;width:67.90px;height:11.80px;background:#f8f8f8;"></div>
<div style="left:24.40px;top:406.00px;width:67.90px;height:0.70px;background:#d4d4d4;"></div>
<div style="left:100.50px;top:388.20px;width:9.20px;height:11.40px;background:#0a0a0a;border-radius:0.8px;"></div>
<span style="left:102.70px;top:389.30px;font-size:6.60px;line-height:10px;height:10px;color:#10b0b0;letter-spacing:-0.152px;">5:</span>
<div style="left:112.70px;top:380.80px;width:67.90px;height:10.40px;border:0.7px solid #e0e0e0;background:#f3f3f3;border-bottom-color:#d0d0d0;"></div>
<div style="left:170.60px;top:381.50px;width:9.30px;height:9.00px;background:#ececec;"></div>
<svg style="position:absolute;left:173.00px;top:384.80px;overflow:visible" width="4.8" height="3" viewBox="0 0 4.8 3"><polygon points="0,0 4.8,0 2.4,3" fill="#555"/></svg>
<div style="left:112.70px;top:394.80px;width:67.90px;height:11.80px;background:#f8f8f8;"></div>
<div style="left:112.70px;top:406.00px;width:67.90px;height:0.70px;background:#d4d4d4;"></div>
<div style="left:188.90px;top:388.20px;width:9.20px;height:11.40px;background:#0a0a0a;border-radius:0.8px;"></div>
<span style="left:191.10px;top:389.30px;font-size:6.60px;line-height:10px;height:10px;color:#6010c0;letter-spacing:-0.152px;">6:</span>
<div style="left:201.10px;top:380.80px;width:67.90px;height:10.40px;border:0.7px solid #e0e0e0;background:#f3f3f3;border-bottom-color:#d0d0d0;"></div>
<div style="left:259.00px;top:381.50px;width:9.30px;height:9.00px;background:#ececec;"></div>
<svg style="position:absolute;left:261.40px;top:384.80px;overflow:visible" width="4.8" height="3" viewBox="0 0 4.8 3"><polygon points="0,0 4.8,0 2.4,3" fill="#555"/></svg>
<div style="left:201.10px;top:394.80px;width:67.90px;height:11.80px;background:#f8f8f8;"></div>
<div style="left:201.10px;top:406.00px;width:67.90px;height:0.70px;background:#d4d4d4;"></div>
<div style="left:12.20px;top:421.50px;width:9.20px;height:6.70px;background:#0a0a0a;border-radius:0.8px;"></div>
<span style="left:14.40px;top:422.60px;font-size:6.60px;line-height:10px;height:10px;color:#c010c0;letter-spacing:-0.152px;">7:</span>
<div style="left:24.40px;top:414.10px;width:67.90px;height:10.40px;border:0.7px solid #e0e0e0;background:#f3f3f3;border-bottom-color:#d0d0d0;"></div>
<div style="left:82.30px;top:414.80px;width:9.30px;height:9.00px;background:#ececec;"></div>
<svg style="position:absolute;left:84.70px;top:418.10px;overflow:visible" width="4.8" height="3" viewBox="0 0 4.8 3"><polygon points="0,0 4.8,0 2.4,3" fill="#555"/></svg>
<div style="left:100.50px;top:421.50px;width:9.20px;height:6.70px;background:#0a0a0a;border-radius:0.8px;"></div>
<span style="left:102.70px;top:422.60px;font-size:6.60px;line-height:10px;height:10px;color:#1060e0;letter-spacing:-0.152px;">8:</span>
<div style="left:112.70px;top:414.10px;width:67.90px;height:10.40px;border:0.7px solid #e0e0e0;background:#f3f3f3;border-bottom-color:#d0d0d0;"></div>
<div style="left:170.60px;top:414.80px;width:9.30px;height:9.00px;background:#ececec;"></div>
<svg style="position:absolute;left:173.00px;top:418.10px;overflow:visible" width="4.8" height="3" viewBox="0 0 4.8 3"><polygon points="0,0 4.8,0 2.4,3" fill="#555"/></svg>
<div style="left:188.90px;top:421.50px;width:9.20px;height:6.70px;background:#0a0a0a;border-radius:0.8px;"></div>
<span style="left:191.10px;top:422.60px;font-size:6.60px;line-height:10px;height:10px;color:#e0e0e0;letter-spacing:-0.152px;">9:</span>
<div style="left:201.10px;top:414.10px;width:67.90px;height:10.40px;border:0.7px solid #e0e0e0;background:#f3f3f3;border-bottom-color:#d0d0d0;"></div>
<div style="left:259.00px;top:414.80px;width:9.30px;height:9.00px;background:#ececec;"></div>
<svg style="position:absolute;left:261.40px;top:418.10px;overflow:visible" width="4.8" height="3" viewBox="0 0 4.8 3"><polygon points="0,0 4.8,0 2.4,3" fill="#555"/></svg>
<div style="left:5.50px;top:428.20px;width:271.50px;height:12.80px;background:#f0f0f0;"></div>
<div style="left:277.00px;top:341.20px;width:9.50px;height:99.80px;background:#f0f0f0;"></div>
<div style="left:279.20px;top:351.60px;width:3.60px;height:55.20px;background:#8a8a8a;"></div>
<div style="left:16.00px;top:431.40px;width:189.60px;height:3.20px;background:#8a8a8a;"></div>
<div style="left:6.20px;top:441.00px;width:279.80px;height:145.20px;background:#000;"></div>
<svg style="position:absolute;left:6.50px;top:476.80px;overflow:visible" width="279.5" height="1" viewBox="0 0 279.5 1"><line x1="0" y1="0.5" x2="279.5" y2="0.5" stroke="#4c4c4c" stroke-width="0.8" stroke-dasharray="1,1"/></svg>
<svg style="position:absolute;left:6.50px;top:513.50px;overflow:visible" width="279.5" height="1" viewBox="0 0 279.5 1"><line x1="0" y1="0.5" x2="279.5" y2="0.5" stroke="#4c4c4c" stroke-width="0.8" stroke-dasharray="1,1"/></svg>
<svg style="position:absolute;left:6.50px;top:549.90px;overflow:visible" width="279.5" height="1" viewBox="0 0 279.5 1"><line x1="0" y1="0.5" x2="279.5" y2="0.5" stroke="#4c4c4c" stroke-width="0.8" stroke-dasharray="1,1"/></svg>
<span style="left:7.20px;top:443.90px;font-size:8.80px;line-height:10px;height:10px;color:#858585;letter-spacing:0.276px;">11634</span>
<span style="left:7.20px;top:466.50px;font-size:8.80px;line-height:10px;height:10px;color:#858585;letter-spacing:0.276px;">11572</span>
<span style="left:7.20px;top:503.30px;font-size:8.80px;line-height:10px;height:10px;color:#858585;letter-spacing:0.276px;">11512</span>
<span style="left:7.20px;top:539.90px;font-size:8.80px;line-height:10px;height:10px;color:#858585;letter-spacing:0.276px;">11452</span>
<span style="left:7.20px;top:575.90px;font-size:8.80px;line-height:10px;height:10px;color:#858585;letter-spacing:0.276px;">11392</span>
<svg style="position:absolute;left:6.2px;top:441px;" width="279.8" height="145.2" viewBox="6.2 441 279.8 145.2"><polyline points="13.2,470.7 15.7,489.5 19.9,459.9 23.6,470.7 25.0,473.8 28.9,474.6 31.2,486.7 33.3,451.3 37.5,490.9 39.6,469.1 41.7,469.1 43.8,477.0 47.9,475.6 50.3,491.6 52.5,461.0 57.2,478.4 59.4,480.2 61.1,484.3 63.2,479.8 68.1,480.7 69.9,474.2 72.2,453.4 74.7,472.8 78.9,456.8 85.0,494.3 87.2,464.5 89.6,465.9 91.7,482.5 96.1,458.9 100.7,467.2 102.8,465.9 104.9,458.5 107.2,458.5 111.1,479.1 113.9,479.8 118.1,466.8 120.6,472.4 122.6,462.0 126.4,480.2 128.5,464.5 131.0,476.3 133.1,467.2 135.4,477.0 139.6,462.4 144.2,480.4 146.2,481.1 148.3,474.2 150.8,483.2 153.2,486.7 157.8,481.8 161.9,466.8 164.3,470.7 166.4,471.4 167.8,446.4 170.3,449.9 172.2,461.7 174.4,466.6 176.8,458.9 179.2,461.7 181.2,457.5 183.8,459.6 185.8,452.0 187.9,472.8 189.7,449.9 192.1,450.2 194.9,452.0 196.7,458.9 198.8,479.1 201.1,442.2 203.2,461.0 205.3,442.2 207.6,474.2 209.9,461.7 211.5,473.8 213.6,459.6 216.1,467.2 218.2,449.9 222.6,470.0 224.7,467.2 227.2,455.4 229.6,454.8 231.7,455.7 233.8,479.1 235.8,468.6 238.2,478.8 242.8,472.1 244.9,453.4 246.9,481.1 249.0,458.2 251.1,461.7 253.9,477.0 255.3,463.8 257.4,475.6 259.7,465.2 262.2,465.2 264.0,462.4 266.4,477.4 268.5,472.1 270.8,442.9 273.1,473.5 277.2,461.0 279.6,471.8 281.7,470.4 283.8,470.4" fill="none" stroke="#f00000" stroke-width="1.4" stroke-linejoin="round"/><polyline points="35.4,563.1 37.5,574.2 39.3,567.2 41.4,580.6 43.8,565.6 45.8,573.9 48.2,566.9 50.3,582.9 52.5,572.5 54.9,581.9 57.2,574.2 59.4,573.2 61.1,580.1 63.2,557.5 65.3,558.9 67.8,570.4 69.9,549.2 72.2,554.4 74.7,565.6 76.8,570.4 79.2,585.7 81.2,569.7 82.9,576.4 85.1,575.3 87.2,578.8 89.6,550.3 91.9,574.6 94.2,582.9 96.2,560.7 100.7,570.0 103.1,564.2 106.9,566.2 111.1,562.8 113.9,560.7 115.7,562.1 118.1,570.8 120.6,566.9 125.0,554.4 126.7,571.8 128.8,572.2 130.8,580.8 133.1,573.2 137.5,581.5 139.6,566.2 141.7,565.6 144.2,578.1 146.5,560.7 148.6,576.7 151.1,567.6 153.2,565.6 155.0,549.6 157.4,576.7 159.7,566.9 161.9,549.6 164.3,553.3 166.4,566.2 167.8,557.9 169.9,565.6 172.2,553.8 174.7,553.8 176.8,565.6 179.2,555.8 181.2,576.0 185.8,566.2 188.2,553.8 190.3,562.8 192.1,581.5 194.2,553.1 196.5,549.6 199.0,561.4 201.1,562.1 203.6,569.4 205.3,535.0 207.6,546.1 209.9,567.6 211.5,547.5 213.6,547.2 216.0,544.4 218.2,551.4 220.3,563.5 222.6,559.3 224.7,574.6 229.6,546.8 233.8,566.2 235.8,570.8 240.0,566.9 242.5,576.9 244.9,568.1 247.2,567.6 249.0,555.1 251.1,557.2 253.9,562.8 255.3,557.2 257.4,562.1 259.7,559.3 261.9,550.0 264.0,551.0 266.4,557.9 268.5,569.0 270.8,553.1 273.1,550.0 275.4,551.0 279.6,580.8 281.7,549.6 284.0,571.8" fill="none" stroke="#00f000" stroke-width="1.4" stroke-linejoin="round"/></svg>
<div style="left:286.60px;top:62.50px;width:4.00px;height:524.00px;background:#fafafa;"></div>
<div style="left:290.00px;top:62.50px;width:628.00px;height:14.90px;background:#f7f7f7;"></div>
<svg style="position:absolute;left:292.00px;top:67.00px;overflow:visible" width="8" height="8" viewBox="0 0 8 8"><circle cx="4" cy="4" r="2.6" fill="#d8d8d8" stroke="#8a8a8a" stroke-width="1.2"/><circle cx="4" cy="4" r="1" fill="#f4f4f4"/><path d="M4 0 L4 8 M0 4 L8 4 M1.2 1.2 L6.8 6.8 M6.8 1.2 L1.2 6.8" stroke="#8a8a8a" stroke-width="0.8" stroke-dasharray="1.2,5.6"/></svg>
<span style="left:303.10px;top:66.60px;font-size:6.70px;line-height:10px;height:10px;color:#333;letter-spacing:-0.519px;">RL78F22_TB_TOUCH_...</span>
<div style="left:386.90px;top:63.20px;width:95.70px;height:14.80px;background:#ffffff;"></div>
<div style="left:386.90px;top:63.20px;width:95.70px;height:1.00px;background:#a8a8a8;"></div>
<div style="left:386.50px;top:63.20px;width:0.70px;height:14.20px;background:#e0e0e0;"></div>
<div style="left:482.30px;top:63.20px;width:0.70px;height:14.20px;background:#e0e0e0;"></div>
<svg style="position:absolute;left:388.60px;top:67.00px;overflow:visible" width="8.4" height="8" viewBox="0 0 8.4 8"><path d="M1.8 1.2 Q0.8 2.6 2.2 3.6 Q0.6 5.4 2.6 7 L6.4 7 Q8 6.2 7.4 4.4 Q6.4 2.8 4.4 3 Q3.8 0.6 1.8 1.2Z" fill="#fff" stroke="#1a1a1a" stroke-width="1.2" stroke-linejoin="round"/></svg>
<span style="left:399.90px;top:66.60px;font-size:6.90px;line-height:10px;height:10px;color:#222;letter-spacing:-0.322px;">CapTouch Status Cha...</span>
<svg style="position:absolute;left:472.00px;top:68.00px;overflow:visible" width="6" height="6" viewBox="0 0 6 6"><path d="M0.4 0.4 L5.6 5.6 M5.6 0.4 L0.4 5.6" stroke="#777" stroke-width="0.7"/></svg>
<svg style="position:absolute;left:486.60px;top:67.00px;overflow:visible" width="7" height="8" viewBox="0 0 7 8"><path d="M0.5 0.5 L4.6 0.5 L6.4 2.3 L6.4 7.5 L0.5 7.5 Z" fill="#fdfdf4" stroke="#b7a45c" stroke-width="0.7"/><rect x="1.6" y="2.6" width="3.6" height="3.8" rx="0.6" fill="#e6eef8" stroke="#5b7fb5" stroke-width="0.6"/></svg>
<span style="left:496.00px;top:66.60px;font-size:6.70px;line-height:10px;height:10px;color:#333;letter-spacing:-0.194px;">qe_touch_sample.c</span>
<svg style="position:absolute;left:569.00px;top:67.00px;overflow:visible" width="7" height="8" viewBox="0 0 7 8"><path d="M0.5 0.5 L4.6 0.5 L6.4 2.3 L6.4 7.5 L0.5 7.5 Z" fill="#fdfdf4" stroke="#b7a45c" stroke-width="0.7"/><path d="M4.6 2.6 Q2 2.2 2.2 3.6 Q2.4 4.4 3.6 4.6 Q4.8 5 4.4 6 Q3.6 6.8 2 6.2" fill="none" stroke="#4a78b4" stroke-width="0.8"/></svg>
<span style="left:578.40px;top:66.60px;font-size:6.70px;line-height:10px;height:10px;color:#333;letter-spacing:-0.110px;">cstart.asm</span>
<svg style="position:absolute;left:626.00px;top:67.00px;overflow:visible" width="7" height="8" viewBox="0 0 7 8"><path d="M0.5 0.5 L4.6 0.5 L6.4 2.3 L6.4 7.5 L0.5 7.5 Z" fill="#fdfdf4" stroke="#b7a45c" stroke-width="0.7"/><rect x="1.6" y="2.6" width="3.6" height="3.8" rx="0.6" fill="#e6eef8" stroke="#5b7fb5" stroke-width="0.6"/></svg>
<span style="left:635.40px;top:66.60px;font-size:6.70px;line-height:10px;height:10px;color:#333;letter-spacing:-0.499px;">RL78F22_TB_TOUCH_...</span>
<svg style="position:absolute;left:722.60px;top:67.00px;overflow:visible" width="7" height="8" viewBox="0 0 7 8"><path d="M0.5 0.5 L4.6 0.5 L6.4 2.3 L6.4 7.5 L0.5 7.5 Z" fill="#fdfdf4" stroke="#b7a45c" stroke-width="0.7"/><rect x="1.6" y="2.6" width="3.6" height="3.8" rx="0.6" fill="#e6eef8" stroke="#5b7fb5" stroke-width="0.6"/></svg>
<span style="left:732.40px;top:66.60px;font-size:6.70px;line-height:10px;height:10px;color:#333;letter-spacing:-0.105px;">qe_touch_config.c</span>
<svg style="position:absolute;left:801.00px;top:67.00px;overflow:visible" width="8" height="8" viewBox="0 0 8 8"><rect x="0.5" y="0.5" width="7" height="7" fill="#e9f1fb" stroke="#4a78b4" stroke-width="0.9"/><path d="M5.4 2.6 Q2.6 2 2.6 4 Q2.6 6 5.4 5.4" fill="none" stroke="#3a68a4" stroke-width="0.8"/></svg>
<span style="left:812.40px;top:66.60px;font-size:6.70px;line-height:10px;height:10px;color:#333;letter-spacing:-0.147px;">ctsu_rd_int() at tuni...</span>
<div style="left:896.60px;top:67.80px;width:6.60px;height:3.00px;border:0.7px solid #8a8a8a;background:#f2f2f2;border-radius:1px;"></div>
<div style="left:908.40px;top:67.40px;width:6.40px;height:6.00px;border:0.7px solid #666;background:#fbfbfb;"></div>
<div style="left:908.40px;top:67.40px;width:6.40px;height:1.50px;background:#666;"></div>
<div style="left:290.00px;top:77.40px;width:628.00px;height:10.60px;background:#ffffff;"></div>
<div style="left:826.20px;top:77.60px;width:22.80px;height:10.40px;background:#cce4f7;"></div>
<svg style="position:absolute;left:828.00px;top:79.00px;overflow:visible" width="7.4" height="7.4" viewBox="0 0 7.4 7.4"><rect x="0.5" y="0.5" width="5.6" height="4" rx="0.7" fill="#f4f6f8" stroke="#6a6a6a" stroke-width="0.9"/><path d="M2 6 L4.6 6" stroke="#777" stroke-width="0.8"/><circle cx="5.6" cy="5.6" r="1.7" fill="#4a90d9"/><path d="M4.8 5.6 L5.4 6.3 L6.5 5" stroke="#fff" stroke-width="0.5" fill="none"/></svg>
<svg style="position:absolute;left:839.00px;top:79.20px;overflow:visible" width="8" height="7" viewBox="0 0 8 7"><rect x="0.5" y="0.5" width="6.6" height="5.4" fill="#f2f2f2" stroke="#6a6a6a" stroke-width="0.9"/><path d="M1.2 4.6 L3 2.6 L4.4 3.8 L6.4 1.6" stroke="#6a6a6a" stroke-width="0.7" fill="none"/><circle cx="6" cy="5.4" r="1.6" fill="#4a90d9"/></svg>
<svg style="position:absolute;left:850.40px;top:79.00px;overflow:visible" width="8.2" height="6.8" viewBox="0 0 8.2 6.8"><rect x="0" y="0" width="8.2" height="6.8" fill="#3d4466"/><rect x="0.8" y="2.4" width="3.6" height="3.4" fill="#dfe4f0"/><rect x="5" y="0.6" width="2.8" height="5.6" fill="#0a4cff"/></svg>
<svg style="position:absolute;left:862.00px;top:79.20px;overflow:visible" width="8" height="7" viewBox="0 0 8 7"><rect x="0.5" y="0.5" width="6.6" height="5.4" fill="#f2f2f2" stroke="#9a9a9a" stroke-width="0.9"/><path d="M1.2 4.6 L3 2.6 L4.4 3.8 L6.4 1.6" stroke="#9a9a9a" stroke-width="0.7" fill="none"/></svg>
<svg style="position:absolute;left:873.40px;top:79.20px;overflow:visible" width="8" height="7" viewBox="0 0 8 7"><rect x="0.5" y="0.5" width="6.6" height="5.4" fill="#f2f2f2" stroke="#9a9a9a" stroke-width="0.9"/><path d="M1.2 4.6 L3 2.6 L4.4 3.8 L6.4 1.6" stroke="#9a9a9a" stroke-width="0.7" fill="none"/></svg>
<svg style="position:absolute;left:885.00px;top:79.20px;overflow:visible" width="8" height="7" viewBox="0 0 8 7"><rect x="0.5" y="0.5" width="6.6" height="5.4" fill="#f2f2f2" stroke="#9a9a9a" stroke-width="0.9"/><path d="M1.2 4.6 L3 2.6 L4.4 3.8 L6.4 1.6" stroke="#9a9a9a" stroke-width="0.7" fill="none"/><rect x="5" y="4.4" width="2.6" height="2.4" fill="#9a9a9a"/></svg>
<svg style="position:absolute;left:896.60px;top:79.20px;overflow:visible" width="8" height="7" viewBox="0 0 8 7"><rect x="0.5" y="0.5" width="6.6" height="5.4" fill="#f2f2f2" stroke="#9a9a9a" stroke-width="0.9"/><path d="M1.2 4.6 L3 2.6 L4.4 3.8 L6.4 1.6" stroke="#9a9a9a" stroke-width="0.7" fill="none"/><rect x="5" y="4.4" width="2.6" height="2.4" fill="#9a9a9a"/></svg>
<div style="left:912.05px;top:77.90px;width:1.50px;height:1.40px;background:#909090;"></div>
<div style="left:912.05px;top:80.50px;width:1.50px;height:1.40px;background:#909090;"></div>
<div style="left:912.05px;top:83.10px;width:1.50px;height:1.40px;background:#909090;"></div>
<div style="left:912.05px;top:85.70px;width:1.50px;height:1.40px;background:#909090;"></div>
<div style="left:290.00px;top:88.00px;width:628.00px;height:118.50px;background:#f6f6f6;"></div>
<div style="left:290.00px;top:88.00px;width:628.00px;height:0.70px;background:#e2e2e2;"></div>
<div style="left:290.00px;top:88.00px;width:0.70px;height:118.50px;background:#e2e2e2;"></div>
<div style="left:917.60px;top:63.00px;width:0.80px;height:417.00px;background:#dcdcdc;"></div>
<span style="left:295.70px;top:94.50px;font-size:6.90px;line-height:10px;height:10px;color:#333;letter-spacing:-0.250px;">Touch I/F:</span>
<div style="left:328.30px;top:93.60px;width:112.10px;height:10.20px;border:0.7px solid #dedede;background:#f3f3f3;"></div>
<div style="left:430.60px;top:94.30px;width:9.10px;height:8.80px;background:#ebebeb;"></div>
<span style="left:331.00px;top:94.40px;font-size:6.90px;line-height:10px;height:10px;color:#2a2a2a;letter-spacing:-0.108px;">Button00 @ config01</span>
<svg style="position:absolute;left:433.40px;top:97.50px;overflow:visible" width="4.6" height="2.8" viewBox="0 0 4.6 2.8"><polygon points="0,0 4.6,0 2.3,2.8" fill="#333"/></svg>
<div style="left:661.80px;top:94.40px;width:7.60px;height:7.80px;border:0.8px solid #a8a8a8;background:#fdfdfd;border-radius:1.2px;"></div>
<span style="left:671.30px;top:94.50px;font-size:6.90px;line-height:10px;height:10px;color:#333;letter-spacing:-0.259px;">Sync a selection</span>
<div style="left:293.50px;top:107.90px;width:621.00px;height:0.80px;background:#d9d9d9;"></div>
<div style="left:293.40px;top:110.00px;width:0.70px;height:10.00px;background:#c8c8c8;"></div>
<div style="left:294.10px;top:110.00px;width:620.40px;height:11.50px;background:#f9f9f9;"></div>
<span style="left:295.50px;top:110.40px;font-size:6.90px;line-height:10px;height:10px;color:#333;letter-spacing:-0.483px;">I/F</span>
<span style="left:305.10px;top:110.40px;font-size:6.90px;line-height:10px;height:10px;color:#333;letter-spacing:-0.475px;">Type:</span>
<span style="left:322.60px;top:110.40px;font-size:6.90px;line-height:10px;height:10px;color:#333;letter-spacing:-0.292px;">Button(self),</span>
<span style="left:359.90px;top:110.40px;font-size:6.90px;line-height:10px;height:10px;color:#333;letter-spacing:-1.509px;">TS</span>
<span style="left:368.30px;top:110.40px;font-size:6.90px;line-height:10px;height:10px;color:#333;letter-spacing:-0.519px;">Pin(s):</span>
<span style="left:387.60px;top:110.40px;font-size:6.90px;line-height:10px;height:10px;color:#333;letter-spacing:-0.673px;">TS02</span>
<span style="left:298.70px;top:129.20px;font-size:6.90px;line-height:10px;height:10px;color:#333;letter-spacing:-0.248px;">Measurement Value:</span>
<div style="left:362.40px;top:127.80px;width:39.50px;height:10.80px;background:#f8f8f8;"></div>
<div style="left:362.40px;top:137.90px;width:39.50px;height:0.80px;background:#d4d4d4;"></div>
<span style="left:378.77px;top:129.10px;font-size:6.90px;line-height:10px;height:10px;color:#2a2a2a;letter-spacing:0.250px;">11586</span>
<span style="left:406.50px;top:129.20px;font-size:6.90px;line-height:10px;height:10px;color:#333;letter-spacing:-0.376px;">Baseline:</span>
<div style="left:436.00px;top:127.80px;width:39.30px;height:10.80px;background:#f8f8f8;"></div>
<div style="left:436.00px;top:137.90px;width:39.30px;height:0.80px;background:#d4d4d4;"></div>
<span style="left:452.17px;top:129.10px;font-size:6.90px;line-height:10px;height:10px;color:#2a2a2a;letter-spacing:0.250px;">11594</span>
<span style="left:480.60px;top:129.20px;font-size:6.90px;line-height:10px;height:10px;color:#333;letter-spacing:-0.280px;">Threshold:</span>
<div style="left:515.40px;top:127.80px;width:39.40px;height:10.80px;background:#f8f8f8;"></div>
<div style="left:515.40px;top:137.90px;width:39.40px;height:0.80px;background:#d4d4d4;"></div>
<span style="left:535.25px;top:129.10px;font-size:6.90px;line-height:10px;height:10px;color:#2a2a2a;letter-spacing:0.250px;">2007</span>
<span style="left:560.20px;top:129.20px;font-size:6.90px;line-height:10px;height:10px;color:#333;letter-spacing:-0.217px;">Touch ON/OFF difference:</span>
<div style="left:640.40px;top:127.80px;width:39.00px;height:10.80px;background:#f8f8f8;"></div>
<div style="left:640.40px;top:137.90px;width:39.00px;height:0.80px;background:#d4d4d4;"></div>
<span style="left:669.56px;top:129.10px;font-size:6.90px;line-height:10px;height:10px;color:#2a2a2a;letter-spacing:0.250px;">-8</span>
<div style="left:297.60px;top:148.70px;width:62.70px;height:11.50px;border:0.7px solid #e2e2e2;background:#fcfcfc;border-radius:1px;"></div>
<span style="left:299.00px;top:150.20px;font-size:6.90px;line-height:10px;height:10px;color:#2a2a2a;letter-spacing:-0.190px;">Start Data Collection</span>
<div style="left:363.90px;top:149.70px;width:292.80px;height:9.10px;background:#e2e2e2;"></div>
<div style="left:290.00px;top:204.20px;width:628.00px;height:0.80px;background:#dcdcdc;"></div>
<div style="left:290.00px;top:205.00px;width:628.00px;height:1.60px;background:#fafafa;"></div>
<div style="left:290.80px;top:206.60px;width:627.00px;height:272.40px;background:#000;"></div>
<svg style="position:absolute;left:291.00px;top:270.60px;overflow:visible" width="626.8" height="1" viewBox="0 0 626.8 1"><line x1="0" y1="0.5" x2="626.8" y2="0.5" stroke="#3c3c3c" stroke-width="0.8" stroke-dasharray="1,1"/></svg>
<svg style="position:absolute;left:291.00px;top:333.70px;overflow:visible" width="626.8" height="1" viewBox="0 0 626.8 1"><line x1="0" y1="0.5" x2="626.8" y2="0.5" stroke="#3c3c3c" stroke-width="0.8" stroke-dasharray="1,1"/></svg>
<svg style="position:absolute;left:291.00px;top:397.10px;overflow:visible" width="626.8" height="1" viewBox="0 0 626.8 1"><line x1="0" y1="0.5" x2="626.8" y2="0.5" stroke="#3c3c3c" stroke-width="0.8" stroke-dasharray="1,1"/></svg>
<div style="left:291.00px;top:461.00px;width:626.80px;height:0.90px;background:#3a3a3a;"></div>
<span style="left:291.60px;top:210.60px;font-size:8.80px;line-height:10px;height:10px;color:#909090;letter-spacing:0.006px;">13601</span>
<span style="left:291.60px;top:260.40px;font-size:8.80px;line-height:10px;height:10px;color:#909090;letter-spacing:0.006px;">13087</span>
<span style="left:291.60px;top:323.20px;font-size:8.80px;line-height:10px;height:10px;color:#909090;letter-spacing:0.006px;">12574</span>
<span style="left:291.60px;top:386.80px;font-size:8.80px;line-height:10px;height:10px;color:#909090;letter-spacing:0.006px;">12061</span>
<span style="left:291.60px;top:451.00px;font-size:8.80px;line-height:10px;height:10px;color:#909090;letter-spacing:0.136px;">11548</span>
<svg style="position:absolute;left:290.8px;top:206.6px;" width="627" height="272.4" viewBox="290.8 206.6 627 272.4"><polyline points="290.8,207.9 399.6,207.9 401.6,209.3 571.4,209.3 573.4,207.9 761.5,207.9" fill="none" stroke="#14c014" stroke-width="1.6"/><line x1="292" y1="457.6" x2="761.4" y2="457.6" stroke="#0000c8" stroke-width="1.6"/><polyline points="292.0,457.3 301.3,455.1 310.2,458.9 315.1,462.2 320.9,456.0 325.8,457.3 330.2,460.4 334.7,457.3 340.2,455.6 345.8,456.7 352.4,457.3 359.1,455.1 364.7,455.1 373.6,459.6 381.3,459.6 389.1,456.9 393.6,457.8 398.7,456.0 408.0,459.6 413.6,456.9 419.1,459.1 423.6,457.3 428.4,459.6 433.6,456.9 439.1,456.0 448.0,460.4 452.4,460.4 458.0,458.2 467.6,461.6 476.9,460.4 485.8,456.9 490.2,457.8 496.9,457.3 502.4,452.9 506.9,453.3 515.8,456.7 521.3,455.1 528.0,456.0 532.4,455.1 536.9,456.0 541.3,453.8 545.8,457.3 550.2,453.8 556.9,453.3 562.4,454.2 570.2,459.6 575.1,451.6 580.2,456.0 584.7,452.4 590.2,457.8 594.7,455.6 599.6,458.2 604.7,455.6 610.2,456.4 614.7,453.3 619.1,454.2 624.7,457.8 630.2,456.4 634.7,454.2 643.6,454.7 649.1,459.6 654.7,457.8 659.1,460.0 668.0,458.2 673.6,454.7 678.0,459.6 683.6,455.1 688.0,456.0 692.9,459.6 698.0,455.6 703.1,458.2 707.6,455.6 712.4,456.4 716.9,455.6 723.1,459.6 728.0,458.2 732.0,451.1 737.3,458.2 746.9,455.6 752.4,458.2 761.3,458.2" fill="none" stroke="#e80000" stroke-width="1.1" stroke-linejoin="round"/></svg>
<div style="left:290.00px;top:479.00px;width:628.00px;height:4.00px;background:#f6f6f6;"></div>
<div style="left:290.00px;top:483.00px;width:628.00px;height:14.00px;background:#f7f7f7;"></div>
<div style="left:290.60px;top:483.60px;width:44.20px;height:13.40px;background:#fafafa;"></div>
<div style="left:334.40px;top:484.00px;width:0.70px;height:12.60px;background:#e0e0e0;"></div>
<span style="left:295.60px;top:486.00px;font-size:6.90px;line-height:10px;height:10px;color:#333;letter-spacing:-0.288px;">Console</span>
<svg style="position:absolute;left:324.00px;top:487.40px;overflow:visible" width="6" height="6" viewBox="0 0 6 6"><path d="M0.4 0.4 L5.6 5.6 M5.6 0.4 L0.4 5.6" stroke="#666" stroke-width="0.7"/></svg>
<div style="left:290.60px;top:495.60px;width:44.20px;height:0.90px;background:#b9b9b9;"></div>
<div style="left:334.80px;top:496.00px;width:583.20px;height:0.70px;background:#e4e4e4;"></div>
<div style="left:815.00px;top:483.80px;width:24.00px;height:10.40px;background:#cce4f7;"></div>
<div style="left:745.00px;top:486.60px;width:5.60px;height:5.60px;background:#9a9a9a;"></div>
<svg style="position:absolute;left:756.40px;top:486.00px;overflow:visible" width="6.4" height="6.4" viewBox="0 0 6.4 6.4"><path d="M0.6 0.6 L5.8 5.8 M5.8 0.6 L0.6 5.8" stroke="#8a8a8a" stroke-width="1.6"/></svg>
<svg style="position:absolute;left:766.60px;top:485.60px;overflow:visible" width="8.4" height="7.4" viewBox="0 0 8.4 7.4"><path d="M0.6 0.6 L4.8 4.8 M4.8 0.6 L0.6 4.8 M3.4 2.8 L7.6 7 M7.6 2.8 L3.4 7" stroke="#8a8a8a" stroke-width="1.4"/></svg>
<div style="left:776.80px;top:484.60px;width:0.80px;height:9.40px;background:#c4c4c4;"></div>
<svg style="position:absolute;left:781.60px;top:485.60px;overflow:visible" width="8" height="7.6" viewBox="0 0 8 7.6"><rect x="0.5" y="0.5" width="5" height="6" fill="#f4f4f4" stroke="#7a7a7a" stroke-width="0.8"/><path d="M1.6 2.2 L4.4 2.2 M1.6 3.8 L4.4 3.8" stroke="#8a8a8a" stroke-width="0.6"/><rect x="4" y="4" width="3.6" height="3.4" fill="#333"/></svg>
<svg style="position:absolute;left:793.40px;top:485.60px;overflow:visible" width="8" height="7.6" viewBox="0 0 8 7.6"><rect x="0.5" y="0.5" width="5" height="6" fill="#f4f4f4" stroke="#7a7a7a" stroke-width="0.8"/><path d="M1.6 2.2 L4.4 2.2 M1.6 3.8 L4.4 3.8" stroke="#8a8a8a" stroke-width="0.6"/><rect x="4" y="4" width="3.6" height="3.4" fill="#d9a33a"/></svg>
<svg style="position:absolute;left:805.00px;top:485.60px;overflow:visible" width="8" height="7.6" viewBox="0 0 8 7.6"><rect x="0.5" y="0.5" width="5" height="6" fill="#f4f4f4" stroke="#7a7a7a" stroke-width="0.8"/><path d="M1.6 2.2 L4.4 2.2 M1.6 3.8 L4.4 3.8" stroke="#8a8a8a" stroke-width="0.6"/><rect x="4" y="4" width="3.6" height="3.4" fill="#d9b04a"/></svg>
<svg style="position:absolute;left:816.80px;top:485.80px;overflow:visible" width="8" height="7" viewBox="0 0 8 7"><rect x="0.5" y="0.5" width="7" height="5" rx="1" fill="#e8f0fa" stroke="#5878a8" stroke-width="0.8"/><path d="M2 6.6 L3.4 5.4" stroke="#5878a8" stroke-width="0.8"/></svg>
<svg style="position:absolute;left:828.60px;top:485.80px;overflow:visible" width="8" height="7" viewBox="0 0 8 7"><rect x="0.5" y="0.5" width="7" height="5" rx="1" fill="#e8f0fa" stroke="#5878a8" stroke-width="0.8"/><rect x="2.6" y="1.8" width="2.6" height="2.4" fill="#d83a3a"/></svg>
<svg style="position:absolute;left:842.60px;top:485.60px;overflow:visible" width="8.4" height="7.4" viewBox="0 0 8.4 7.4"><rect x="0.5" y="2" width="6.8" height="5" fill="#eef3fa" stroke="#4d6d9a" stroke-width="0.8"/><rect x="0.5" y="2" width="6.8" height="1.4" fill="#4d7fc8"/><path d="M4.4 3 L7.8 0.6" stroke="#2f9a4f" stroke-width="1.4"/></svg>
<svg style="position:absolute;left:854.80px;top:485.80px;overflow:visible" width="8.4" height="7.2" viewBox="0 0 8.4 7.2"><rect x="0.5" y="0.5" width="7.2" height="5" rx="0.6" fill="#4d7fd8" stroke="#34507a" stroke-width="0.8"/><rect x="1.8" y="1.6" width="4.6" height="2.8" fill="#dfeaff"/><path d="M2.4 6.8 L5.8 6.8" stroke="#34507a" stroke-width="0.8"/></svg>
<svg style="position:absolute;left:866.20px;top:488.40px;overflow:visible" width="4" height="2.4" viewBox="0 0 4 2.4"><polygon points="0,0 4,0 2,2.4" fill="#222"/></svg>
<svg style="position:absolute;left:875.00px;top:485.60px;overflow:visible" width="8.6" height="7.4" viewBox="0 0 8.6 7.4"><rect x="0.5" y="1.6" width="6.8" height="5.4" fill="#fbfbfb" stroke="#4d6d9a" stroke-width="0.8"/><rect x="0.5" y="1.6" width="6.8" height="1.4" fill="#4d7fc8"/><path d="M7 0 L7 3 M5.5 1.5 L8.5 1.5" stroke="#d9a21e" stroke-width="1"/></svg>
<svg style="position:absolute;left:887.40px;top:488.40px;overflow:visible" width="4" height="2.4" viewBox="0 0 4 2.4"><polygon points="0,0 4,0 2,2.4" fill="#222"/></svg>
<div style="left:896.40px;top:486.20px;width:6.60px;height:3.00px;border:0.7px solid #8a8a8a;background:#f2f2f2;border-radius:1px;"></div>
<div style="left:908.40px;top:486.00px;width:6.40px;height:6.00px;border:0.7px solid #666;background:#fbfbfb;"></div>
<div style="left:908.40px;top:486.00px;width:6.40px;height:1.50px;background:#666;"></div>
<span style="left:290.20px;top:497.80px;font-size:6.80px;line-height:10px;height:10px;color:#333;letter-spacing:-0.602px;">RL78F22_TB_TOUCH_SAMPLE</span>
<span style="left:378.60px;top:497.80px;font-size:6.80px;line-height:10px;height:10px;color:#333;letter-spacing:-0.194px;">HardwareDebug</span>
<span style="left:428.60px;top:497.80px;font-size:6.80px;line-height:10px;height:10px;color:#333;letter-spacing:-0.416px;">[Renesas</span>
<span style="left:456.40px;top:497.80px;font-size:6.80px;line-height:10px;height:10px;color:#333;letter-spacing:-0.845px;">GDB</span>
<span style="left:471.00px;top:497.80px;font-size:6.80px;line-height:10px;height:10px;color:#333;letter-spacing:-0.197px;">Hardware</span>
<span style="left:501.30px;top:497.80px;font-size:6.80px;line-height:10px;height:10px;color:#333;letter-spacing:-0.008px;">Debugging]</span>
<span style="left:540.10px;top:497.80px;font-size:6.80px;line-height:10px;height:10px;color:#333;letter-spacing:-0.071px;">[pid:</span>
<span style="left:555.40px;top:497.80px;font-size:6.80px;line-height:10px;height:10px;color:#333;letter-spacing:-0.351px;">34]</span>
<div style="left:290.60px;top:507.00px;width:618.60px;height:70.60px;background:#ffffff;"></div>
<div style="left:909.20px;top:507.00px;width:8.40px;height:70.60px;background:#f0f0f0;"></div>
<div style="left:912.20px;top:546.40px;width:3.70px;height:14.60px;background:#8a8a8a;"></div>
<div style="left:290.60px;top:577.60px;width:627.00px;height:8.90px;background:#f0f0f0;"></div>
<div style="left:300.40px;top:579.40px;width:107.40px;height:4.20px;background:#8a8a8a;"></div>
<span style="left:291.10px;top:510.00px;font-size:6.80px;line-height:10px;height:10px;color:#1a1a1a;font-family:'Liberation Mono',monospace;letter-spacing:0.016px;-webkit-text-stroke:0.2px #1a1a1a;">Finished target connection</span>
<span style="left:291.10px;top:518.44px;font-size:6.80px;line-height:10px;height:10px;color:#1a1a1a;font-family:'Liberation Mono',monospace;letter-spacing:0.016px;-webkit-text-stroke:0.2px #1a1a1a;">GDB: 58205</span>
<span style="left:291.10px;top:526.88px;font-size:6.80px;line-height:10px;height:10px;color:#1a1a1a;font-family:'Liberation Mono',monospace;letter-spacing:0.016px;-webkit-text-stroke:0.2px #1a1a1a;">Target connection status - OK</span>
<span style="left:291.10px;top:535.32px;font-size:6.80px;line-height:10px;height:10px;color:#1a1a1a;font-family:'Liberation Mono',monospace;letter-spacing:0.016px;-webkit-text-stroke:0.2px #1a1a1a;">Target connection status - OK</span>
<span style="left:291.10px;top:543.76px;font-size:6.80px;line-height:10px;height:10px;color:#1a1a1a;font-family:'Liberation Mono',monospace;letter-spacing:0.016px;-webkit-text-stroke:0.2px #1a1a1a;">Starting download</span>
<span style="left:291.10px;top:552.20px;font-size:6.80px;line-height:10px;height:10px;color:#1a1a1a;font-family:'Liberation Mono',monospace;letter-spacing:0.016px;-webkit-text-stroke:0.2px #1a1a1a;">Debug monitor area 1, writing to address 0x00000002 with data ffff</span>
<span style="left:291.10px;top:560.64px;font-size:6.80px;line-height:10px;height:10px;color:#1a1a1a;font-family:'Liberation Mono',monospace;letter-spacing:0.016px;-webkit-text-stroke:0.2px #1a1a1a;">Options bytes, writing to address 0x000000c0 with data effae0a4</span>
<span style="left:291.10px;top:569.08px;font-size:6.80px;line-height:10px;height:10px;color:#1a1a1a;font-family:'Liberation Mono',monospace;letter-spacing:0.016px;-webkit-text-stroke:0.2px #1a1a1a;">Security ID, writing to address 0x000000c6 with data 00000000000000000000000000000000</span>
<div style="left:918.40px;top:62.50px;width:3.60px;height:524.00px;background:#fafafa;"></div>
<div style="left:922.00px;top:62.50px;width:158.00px;height:14.50px;background:#f7f7f7;"></div>
<div style="left:922.00px;top:63.00px;width:98.00px;height:14.00px;background:#fafafa;"></div>
<div style="left:1019.60px;top:63.50px;width:0.80px;height:13.50px;background:#e2e2e2;"></div>
<span style="left:927.80px;top:66.60px;font-size:6.90px;line-height:10px;height:10px;color:#333;letter-spacing:-0.339px;">CapTouch Parameters (QE)</span>
<svg style="position:absolute;left:1010.00px;top:68.00px;overflow:visible" width="6" height="6" viewBox="0 0 6 6"><path d="M0.4 0.4 L5.6 5.6 M5.6 0.4 L0.4 5.6" stroke="#666" stroke-width="0.7"/></svg>
<div style="left:922.00px;top:75.90px;width:98.00px;height:1.00px;background:#5b8fd6;"></div>
<div style="left:1020.00px;top:76.30px;width:60.00px;height:0.70px;background:#e4e4e4;"></div>
<div style="left:1056.80px;top:67.80px;width:6.60px;height:3.00px;border:0.7px solid #8a8a8a;background:#f2f2f2;border-radius:1px;"></div>
<div style="left:1068.30px;top:67.40px;width:6.40px;height:6.00px;border:0.7px solid #666;background:#fbfbfb;"></div>
<div style="left:1068.30px;top:67.40px;width:6.40px;height:1.50px;background:#666;"></div>
<div style="left:922.00px;top:77.00px;width:158.00px;height:509.50px;background:#f6f6f6;"></div>
<div style="left:999.40px;top:77.40px;width:10.00px;height:10.20px;background:#cce4f7;"></div>
<svg style="position:absolute;left:1000.60px;top:79.00px;overflow:visible" width="7.4" height="7.4" viewBox="0 0 7.4 7.4"><rect x="0.5" y="0.5" width="5.6" height="4" rx="0.7" fill="#f4f6f8" stroke="#6a6a6a" stroke-width="0.9"/><path d="M2 6 L4.6 6" stroke="#777" stroke-width="0.8"/><circle cx="5.6" cy="5.6" r="1.7" fill="#4a90d9"/><path d="M4.8 5.6 L5.4 6.3 L6.5 5" stroke="#fff" stroke-width="0.5" fill="none"/></svg>
<svg style="position:absolute;left:1010.00px;top:79.00px;overflow:visible" width="8" height="7.4" viewBox="0 0 8 7.4"><rect x="0.4" y="0.4" width="7.2" height="6.4" fill="#e8e8e8" stroke="#444" stroke-width="0.8"/><rect x="0.4" y="0.4" width="7.2" height="2" fill="#444"/><path d="M2.8 2.4 L2.8 6.8 M5.2 2.4 L5.2 6.8 M0.4 4.6 L7.6 4.6" stroke="#555" stroke-width="0.6"/></svg>
<svg style="position:absolute;left:1021.80px;top:78.60px;overflow:visible" width="8.4" height="8" viewBox="0 0 8.4 8"><rect x="1" y="1.6" width="6.4" height="6" fill="#e8e8e8" stroke="#555" stroke-width="0.8"/><path d="M2.4 3.6 L6 3.6 M2.4 5.4 L6 5.4 M4.2 2.4 L4.2 7" stroke="#666" stroke-width="0.6"/><rect x="0" y="0" width="3" height="3" fill="#2f9a4f"/></svg>
<svg style="position:absolute;left:1033.00px;top:78.60px;overflow:visible" width="8.4" height="8" viewBox="0 0 8.4 8"><rect x="1" y="1.6" width="6.4" height="6" fill="#e8e8e8" stroke="#555" stroke-width="0.8"/><path d="M2.4 3.6 L6 3.6 M2.4 5.4 L6 5.4 M4.2 2.4 L4.2 7" stroke="#666" stroke-width="0.6"/><rect x="0" y="0" width="3" height="3" fill="#2f9a4f"/></svg>
<svg style="position:absolute;left:1044.60px;top:78.60px;overflow:visible" width="8.4" height="8" viewBox="0 0 8.4 8"><rect x="1" y="1.6" width="6.4" height="6" fill="#e8e8e8" stroke="#555" stroke-width="0.8"/><path d="M2.4 3.6 L6 3.6 M2.4 5.4 L6 5.4 M4.2 2.4 L4.2 7" stroke="#666" stroke-width="0.6"/><rect x="0" y="0" width="3" height="3" fill="#2f9a4f"/></svg>
<svg style="position:absolute;left:1056.40px;top:78.80px;overflow:visible" width="8.4" height="7.8" viewBox="0 0 8.4 7.8"><path d="M1 5.4 L4.6 1 L7.6 3.4 L4.2 7.4 Z" fill="#d0d6e0" stroke="#4a5568" stroke-width="0.8"/><path d="M0.4 7.4 L3.4 7.4" stroke="#4a78c8" stroke-width="1"/></svg>
<div style="left:1071.25px;top:77.90px;width:1.50px;height:1.40px;background:#909090;"></div>
<div style="left:1071.25px;top:80.50px;width:1.50px;height:1.40px;background:#909090;"></div>
<div style="left:1071.25px;top:83.10px;width:1.50px;height:1.40px;background:#909090;"></div>
<div style="left:1071.25px;top:85.70px;width:1.50px;height:1.40px;background:#909090;"></div>
<span style="left:930.50px;top:127.90px;font-size:6.90px;line-height:10px;height:10px;color:#333;letter-spacing:-0.210px;">Touch I/F:</span>
<div style="left:963.00px;top:127.20px;width:113.00px;height:10.20px;border:0.7px solid #dedede;background:#f3f3f3;"></div>
<div style="left:1065.60px;top:127.90px;width:9.70px;height:8.80px;background:#ebebeb;"></div>
<div style="left:964.60px;top:129.00px;width:0.60px;height:7.00px;background:#333;"></div>
<span style="left:965.60px;top:127.90px;font-size:6.90px;line-height:10px;height:10px;color:#2a2a2a;letter-spacing:-0.082px;">Button00 @ config01</span>
<svg style="position:absolute;left:1068.40px;top:131.00px;overflow:visible" width="4.6" height="2.8" viewBox="0 0 4.6 2.8"><polygon points="0,0 4.6,0 2.3,2.8" fill="#333"/></svg>
<span style="left:930.30px;top:144.20px;font-size:6.90px;line-height:10px;height:10px;color:#333;letter-spacing:-0.483px;">I/F</span>
<span style="left:939.90px;top:144.20px;font-size:6.90px;line-height:10px;height:10px;color:#333;letter-spacing:-0.475px;">Type:</span>
<span style="left:957.40px;top:144.20px;font-size:6.90px;line-height:10px;height:10px;color:#333;letter-spacing:-0.292px;">Button(self),</span>
<span style="left:994.70px;top:144.20px;font-size:6.90px;line-height:10px;height:10px;color:#333;letter-spacing:-1.509px;">TS</span>
<span style="left:1003.10px;top:144.20px;font-size:6.90px;line-height:10px;height:10px;color:#333;letter-spacing:-0.519px;">Pin(s):</span>
<span style="left:1022.40px;top:144.20px;font-size:6.90px;line-height:10px;height:10px;color:#333;letter-spacing:-0.673px;">TS02</span>
<div style="left:928.40px;top:143.00px;width:0.70px;height:9.00px;background:#c8c8c8;"></div>
<div style="left:928.50px;top:162.60px;width:145.30px;height:247.20px;border:0.8px solid #dadada;background:#ffffff;"></div>
<div style="left:929.3px;top:164px;width:143.8px;height:245px;overflow:hidden;">
<span style="left:1.90px;top:0.70px;font-size:6.90px;line-height:10px;height:10px;color:#2a2a2a;letter-spacing:-0.505px;">Item</span>
<span style="left:1.90px;top:11.90px;font-size:6.90px;line-height:10px;height:10px;color:#2a2a2a;letter-spacing:-0.071px;">Sample count for drift correction (number of samples)</span>
<span style="left:1.90px;top:22.80px;font-size:6.90px;line-height:10px;height:10px;color:#2a2a2a;letter-spacing:-0.188px;">Continuous Touch Cancel Count (Count)</span>
<span style="left:1.90px;top:33.60px;font-size:6.90px;line-height:10px;height:10px;color:#2a2a2a;letter-spacing:0.008px;">Debouncing count of touch-on filter (Count)</span>
<span style="left:1.90px;top:44.40px;font-size:6.90px;line-height:10px;height:10px;color:#2a2a2a;letter-spacing:0.027px;">Debouncing count of touch-off filter (Count)</span>
<span style="left:1.90px;top:55.20px;font-size:6.90px;line-height:10px;height:10px;color:#2a2a2a;letter-spacing:-0.078px;">Average sample count for moving average filter (Count)</span>
<span style="left:1.90px;top:65.90px;font-size:6.90px;line-height:10px;height:10px;color:#2a2a2a;letter-spacing:-0.166px;">Touch Threshold</span>
<span style="left:1.90px;top:76.70px;font-size:6.90px;line-height:10px;height:10px;color:#2a2a2a;letter-spacing:-0.201px;">Hysteresis</span>
<div style="left:0;top:11.07px;width:144px;height:0.7px;background:#f7f7f7;"></div>
<div style="left:0;top:21.94px;width:144px;height:0.7px;background:#f7f7f7;"></div>
<div style="left:0;top:32.81px;width:144px;height:0.7px;background:#f7f7f7;"></div>
<div style="left:0;top:43.68px;width:144px;height:0.7px;background:#f7f7f7;"></div>
<div style="left:0;top:54.55px;width:144px;height:0.7px;background:#f7f7f7;"></div>
<div style="left:0;top:65.42px;width:144px;height:0.7px;background:#f7f7f7;"></div>
<div style="left:0;top:76.29px;width:144px;height:0.7px;background:#f7f7f7;"></div>
<div style="left:0;top:87.16px;width:144px;height:0.7px;background:#f7f7f7;"></div>
<div style="left:0;top:98.03px;width:144px;height:0.7px;background:#f7f7f7;"></div>
<div style="left:0;top:108.90px;width:144px;height:0.7px;background:#f7f7f7;"></div>
<div style="left:0;top:119.77px;width:144px;height:0.7px;background:#f7f7f7;"></div>
<div style="left:0;top:130.64px;width:144px;height:0.7px;background:#f7f7f7;"></div>
<div style="left:0;top:141.51px;width:144px;height:0.7px;background:#f7f7f7;"></div>
<div style="left:0;top:152.38px;width:144px;height:0.7px;background:#f7f7f7;"></div>
<div style="left:0;top:163.25px;width:144px;height:0.7px;background:#f7f7f7;"></div>
<div style="left:0;top:174.12px;width:144px;height:0.7px;background:#f7f7f7;"></div>
<div style="left:0;top:184.99px;width:144px;height:0.7px;background:#f7f7f7;"></div>
<div style="left:0;top:195.86px;width:144px;height:0.7px;background:#f7f7f7;"></div>
<div style="left:0;top:206.73px;width:144px;height:0.7px;background:#f7f7f7;"></div>
<div style="left:0;top:217.60px;width:144px;height:0.7px;background:#f7f7f7;"></div>
<div style="left:0;top:228.47px;width:144px;height:0.7px;background:#f7f7f7;"></div>
<div style="left:0;top:239.34px;width:144px;height:0.7px;background:#f7f7f7;"></div>
</div>
<div style="left:929.30px;top:400.80px;width:143.70px;height:8.20px;background:#f0f0f0;"></div>
<div style="left:938.80px;top:403.00px;width:78.70px;height:3.60px;background:#8a8a8a;"></div>
<div style="left:925.00px;top:414.00px;width:141.40px;height:168.60px;background:#f8f8f8;"></div>
<div style="left:1066.40px;top:414.00px;width:11.00px;height:168.60px;background:#f0f0f0;"></div>
<svg style="position:absolute;left:1068.90px;top:419.40px;overflow:visible" width="3.8" height="2.4" viewBox="0 0 3.8 2.4"><polygon points="0,2.4 3.8,2.4 1.9,0" fill="#9a9a9a"/></svg>
<svg style="position:absolute;left:1068.90px;top:577.20px;overflow:visible" width="3.8" height="2.4" viewBox="0 0 3.8 2.4"><polygon points="0,0 3.8,0 1.9,2.4" fill="#9a9a9a"/></svg>
<div style="left:925.00px;top:582.80px;width:152.40px;height:0.80px;background:#c8c8c8;"></div>
<div style="left:3.00px;top:75.40px;width:67.40px;height:21.50px;border:4.7px solid #fe0000;border-radius:2.5px;"></div>
<div style="left:64.60px;top:92.20px;width:128.80px;height:25.40px;border:4.7px solid #fe0000;border-radius:2.5px;"></div>
<div style="left:279.60px;top:87.20px;width:166.70px;height:22.60px;border:5.2px solid #fe0000;border-radius:2.5px;"></div>
<div style="left:911.70px;top:122.20px;width:169.30px;height:24.60px;border:5px solid #fe0000;border-radius:2.5px;"></div>
<div style="left:5.00px;top:337.80px;width:200.60px;height:39.50px;border:5px solid #fe0000;border-radius:2.5px;"></div>
<svg style="position:absolute;left:0.00px;top:0.00px;overflow:visible" width="200" height="100" viewBox="0 0 200 100"><polygon points="137,5.7 148.8,20.9 88.5,65.7 95,73.4 66.9,69 72.4,42.2 77.2,50.4" fill="#4472b0" stroke="#172c51" stroke-width="2.2" stroke-linejoin="miter"/></svg>
</div>
</body>
</html>
